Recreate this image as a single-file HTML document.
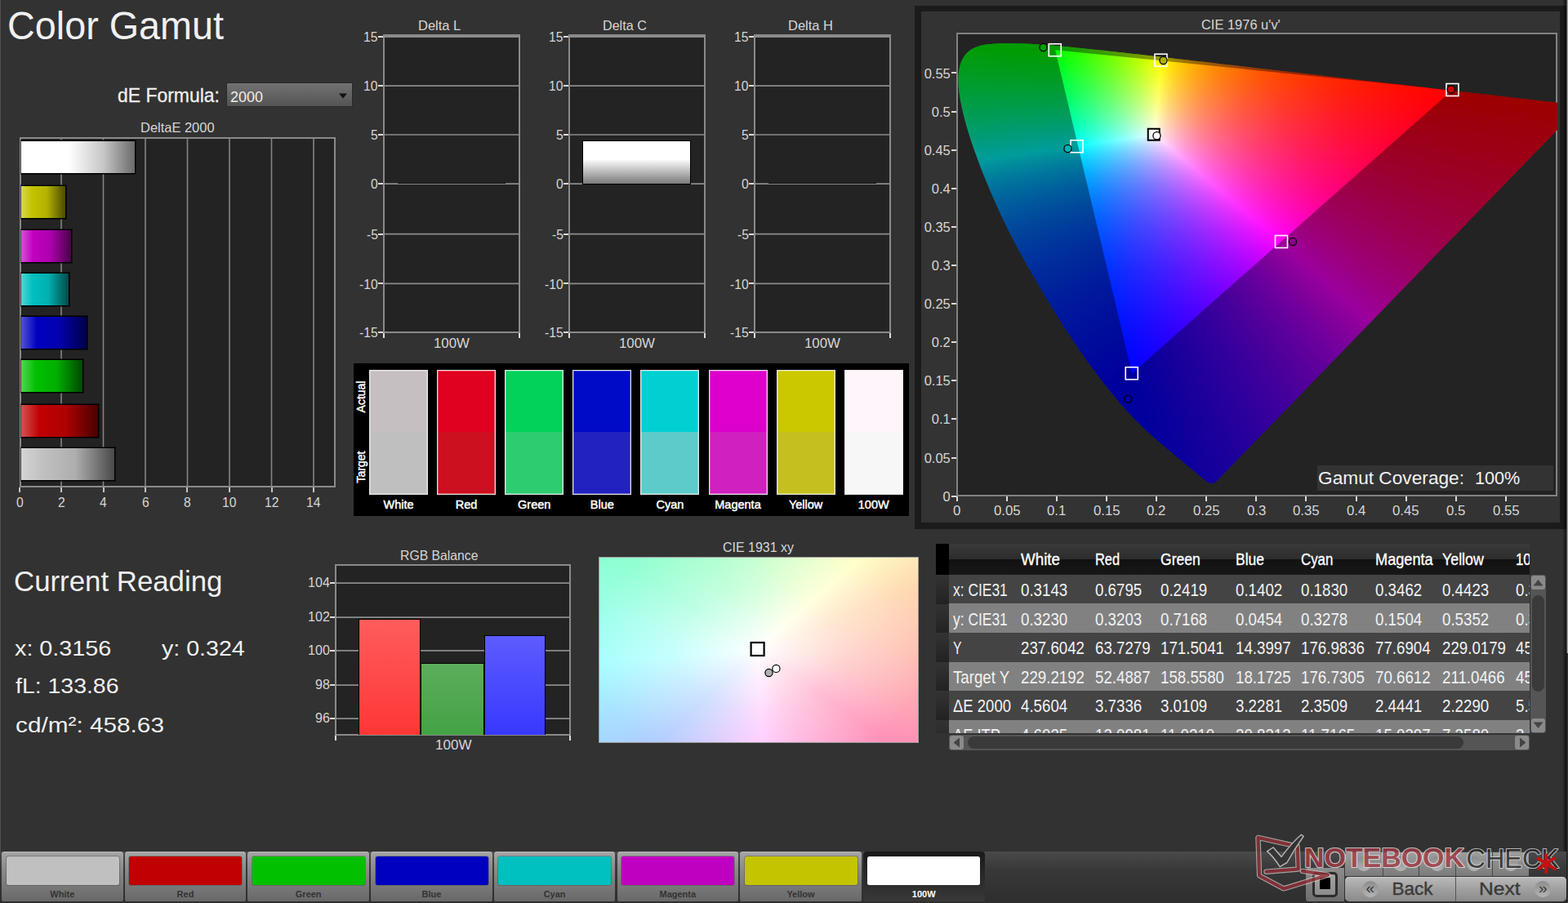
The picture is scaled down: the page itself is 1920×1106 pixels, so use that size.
<!DOCTYPE html>
<html lang="en"><head><meta charset="utf-8"><title>Color Gamut</title>
<style>
html,body{margin:0;padding:0}
body{width:1920px;height:1106px;background:#323232;position:relative;overflow:hidden;font-family:"Liberation Sans",sans-serif;color:#e6e6e6}
.a{position:absolute}
.t{position:absolute;white-space:pre;line-height:1;transform-origin:0 0}
.f i{display:block;height:2px}
</style></head>
<body>
<div class="a" style="left:0;top:0;width:1px;height:1106px;background:#525252"></div><div class="a" style="left:1px;top:0;width:1px;height:1106px;background:#2d2d2d"></div>
<span class="t" style="left:9px;top:6.94px;font-size:48.5px;transform:scaleX(0.964);color:#f0f0f0;">Color Gamut</span>
<span class="t" style="left:143.5px;top:104.68px;font-size:24px;transform:scaleX(0.956);color:#f0f0f0;-webkit-text-stroke:.3px #f0f0f0;">dE Formula:</span>
<div class="a" style="left:276.5px;top:100.6px;width:155px;height:30.4px;background:linear-gradient(#727272,#545454);border:1px solid #2a2a2a;box-sizing:border-box"></div>
<span class="t" style="left:282px;top:110.14px;font-size:18.5px;transform:scaleX(0.972);color:#eee;">2000</span>
<svg class="a" style="left:414px;top:114px" width="12" height="7" viewBox="0 0 12 7"><path d="M1,0.5H11L6,6.5Z" fill="#111"/></svg>
<span class="t" style="left:16.5px;top:694.55px;font-size:34.5px;transform:scaleX(1.009);color:#f0f0f0;">Current Reading</span>
<span class="t" style="left:18px;top:780.57px;font-size:26.5px;transform:scaleX(1.085);color:#f0f0f0;">x: 0.3156</span>
<span class="t" style="left:198.25px;top:780.57px;font-size:26.5px;transform:scaleX(1.079);color:#f0f0f0;">y: 0.324</span>
<span class="t" style="left:18.5px;top:826.87px;font-size:26.5px;transform:scaleX(1.073);color:#f0f0f0;">fL: 133.86</span>
<span class="t" style="left:18.5px;top:875.07px;font-size:26.5px;transform:scaleX(1.123);color:#f0f0f0;">cd/m²: 458.63</span>
<div class="a" style="left:24px;top:167.5px;width:387px;height:429.5px;background:#232323;border:2px solid #8a8a8a;box-sizing:border-box"></div>
<svg class="a" style="left:0;top:160px" width="420" height="450" viewBox="0 160 420 450"><path d="M75.00,169.5V595M126.50,169.5V595M178.00,169.5V595M229.50,169.5V595M281.00,169.5V595M332.50,169.5V595M384.00,169.5V595" stroke="#848484" stroke-width="1.6" fill="none"/></svg>
<div class="a" style="left:23px;top:597px;width:2px;height:6px;background:#c2c2c2;"></div>
<span class="t" style="left:20.04px;top:607.03px;font-size:16.5px;transform:scaleX(0.950);color:#d6d6d6;">0</span>
<div class="a" style="left:74px;top:597px;width:2px;height:6px;background:#c2c2c2;"></div>
<span class="t" style="left:70.64px;top:607.03px;font-size:16.5px;transform:scaleX(0.950);color:#d6d6d6;">2</span>
<div class="a" style="left:126px;top:597px;width:2px;height:6px;background:#c2c2c2;"></div>
<span class="t" style="left:122.14px;top:607.03px;font-size:16.5px;transform:scaleX(0.950);color:#d6d6d6;">4</span>
<div class="a" style="left:177px;top:597px;width:2px;height:6px;background:#c2c2c2;"></div>
<span class="t" style="left:173.64px;top:607.03px;font-size:16.5px;transform:scaleX(0.950);color:#d6d6d6;">6</span>
<div class="a" style="left:228px;top:597px;width:2px;height:6px;background:#c2c2c2;"></div>
<span class="t" style="left:225.14px;top:607.03px;font-size:16.5px;transform:scaleX(0.950);color:#d6d6d6;">8</span>
<div class="a" style="left:280px;top:597px;width:2px;height:6px;background:#c2c2c2;"></div>
<span class="t" style="left:272.28px;top:607.03px;font-size:16.5px;transform:scaleX(0.950);color:#d6d6d6;">10</span>
<div class="a" style="left:332px;top:597px;width:2px;height:6px;background:#c2c2c2;"></div>
<span class="t" style="left:323.78px;top:607.03px;font-size:16.5px;transform:scaleX(0.950);color:#d6d6d6;">12</span>
<div class="a" style="left:383px;top:597px;width:2px;height:6px;background:#c2c2c2;"></div>
<span class="t" style="left:375.28px;top:607.03px;font-size:16.5px;transform:scaleX(0.950);color:#d6d6d6;">14</span>
<div class="a" style="left:26px;top:172.1px;width:140.31px;height:41px;background:linear-gradient(90deg,#fff 0,#fff 42%,#c7c7c7 72%,#6b6b6b 100%);border:1px solid #000;border-left:0;box-sizing:border-box;box-shadow:0 0 0 1px rgba(0,0,0,.5)"></div>
<div class="a" style="left:26px;top:226.8px;width:54.82px;height:41px;background:linear-gradient(90deg,#d7d752 0,#c4c400 24%,#b2b202 58%,#4a4a00 100%);border:1px solid #000;border-left:0;box-sizing:border-box;box-shadow:0 0 0 1px rgba(0,0,0,.5)"></div>
<div class="a" style="left:26px;top:280.5px;width:61.77px;height:41px;background:linear-gradient(90deg,#d452d4 0,#c000c0 24%,#ae02ae 58%,#490049 100%);border:1px solid #000;border-left:0;box-sizing:border-box;box-shadow:0 0 0 1px rgba(0,0,0,.5)"></div>
<div class="a" style="left:26px;top:333.7px;width:58.68px;height:41px;background:linear-gradient(90deg,#52d4d4 0,#00c0c0 24%,#02aeae 58%,#004949 100%);border:1px solid #000;border-left:0;box-sizing:border-box;box-shadow:0 0 0 1px rgba(0,0,0,.5)"></div>
<div class="a" style="left:26px;top:387px;width:80.83px;height:41px;background:linear-gradient(90deg,#5252d4 0,#0000c0 24%,#0202ae 58%,#000049 100%);border:1px solid #000;border-left:0;box-sizing:border-box;box-shadow:0 0 0 1px rgba(0,0,0,.5)"></div>
<div class="a" style="left:26px;top:440.3px;width:75.68px;height:41px;background:linear-gradient(90deg,#52d452 0,#00c000 24%,#02ae02 58%,#004900 100%);border:1px solid #000;border-left:0;box-sizing:border-box;box-shadow:0 0 0 1px rgba(0,0,0,.5)"></div>
<div class="a" style="left:26px;top:494.8px;width:94.73px;height:41px;background:linear-gradient(90deg,#d45252 0,#c00000 24%,#ae0202 58%,#490000 100%);border:1px solid #000;border-left:0;box-sizing:border-box;box-shadow:0 0 0 1px rgba(0,0,0,.5)"></div>
<div class="a" style="left:26px;top:548.3px;width:114.69px;height:41px;background:linear-gradient(90deg,#d4d4d4 0,#c0c0c0 24%,#aeaeae 58%,#494949 100%);border:1px solid #000;border-left:0;box-sizing:border-box;box-shadow:0 0 0 1px rgba(0,0,0,.5)"></div>
<span class="t" style="left:172px;top:148.03px;font-size:16.5px;transform:scaleX(0.997);color:#d6d6d6;">DeltaE 2000</span>
<div class="a" style="left:469px;top:42px;width:168px;height:366px;background:#232323;border:2px solid #8a8a8a;border-top-width:4px;box-sizing:border-box"></div>
<div class="a" style="left:463px;top:44px;width:6px;height:2px;background:#dcdcdc;"></div>
<span class="t" style="left:445.06px;top:37.23px;font-size:16.5px;transform:scaleX(0.950);color:#d6d6d6;">15</span>
<div class="a" style="left:463px;top:104px;width:6px;height:2px;background:#dcdcdc;"></div>
<span class="t" style="left:445.06px;top:97.43px;font-size:16.5px;transform:scaleX(0.950);color:#d6d6d6;">10</span>
<div class="a" style="left:463px;top:164px;width:6px;height:2px;background:#dcdcdc;"></div>
<span class="t" style="left:453.78px;top:157.23px;font-size:16.5px;transform:scaleX(0.950);color:#d6d6d6;">5</span>
<div class="a" style="left:463px;top:224px;width:6px;height:2px;background:#dcdcdc;"></div>
<span class="t" style="left:453.78px;top:217.43px;font-size:16.5px;transform:scaleX(0.950);color:#d6d6d6;">0</span>
<div class="a" style="left:463px;top:286px;width:6px;height:2px;background:#dcdcdc;"></div>
<span class="t" style="left:448.56px;top:278.93px;font-size:16.5px;transform:scaleX(0.950);color:#d6d6d6;">-5</span>
<div class="a" style="left:463px;top:346px;width:6px;height:2px;background:#dcdcdc;"></div>
<span class="t" style="left:439.84px;top:339.53px;font-size:16.5px;transform:scaleX(0.950);color:#d6d6d6;">-10</span>
<div class="a" style="left:463px;top:406px;width:6px;height:2px;background:#dcdcdc;"></div>
<span class="t" style="left:439.84px;top:399.23px;font-size:16.5px;transform:scaleX(0.950);color:#d6d6d6;">-15</span>
<div class="a" style="left:469px;top:408px;width:2px;height:6px;background:#dcdcdc;"></div>
<div class="a" style="left:635px;top:408px;width:2px;height:6px;background:#dcdcdc;"></div>
<svg class="a" style="left:469px;top:40px" width="168" height="370" viewBox="469 40 168 370"><path d="M471,105.20H635M471,165.00H635M471,225.20H635M471,286.70H635M471,347.30H635" stroke="#8c8c8c" stroke-width="1.7" fill="none"/></svg>
<div class="a" style="left:487px;top:224px;width:132px;height:1px;background:#111;"></div>
<span class="t" style="left:512px;top:22.61px;font-size:17px;transform:scaleX(0.971);color:#d6d6d6;">Delta L</span>
<span class="t" style="left:531px;top:411.53px;font-size:16.5px;transform:scaleX(1.021);color:#d6d6d6;">100W</span>
<div class="a" style="left:696px;top:42px;width:168px;height:366px;background:#232323;border:2px solid #8a8a8a;border-top-width:4px;box-sizing:border-box"></div>
<div class="a" style="left:690px;top:44px;width:6px;height:2px;background:#dcdcdc;"></div>
<span class="t" style="left:672.06px;top:37.23px;font-size:16.5px;transform:scaleX(0.950);color:#d6d6d6;">15</span>
<div class="a" style="left:690px;top:104px;width:6px;height:2px;background:#dcdcdc;"></div>
<span class="t" style="left:672.06px;top:97.43px;font-size:16.5px;transform:scaleX(0.950);color:#d6d6d6;">10</span>
<div class="a" style="left:690px;top:164px;width:6px;height:2px;background:#dcdcdc;"></div>
<span class="t" style="left:680.78px;top:157.23px;font-size:16.5px;transform:scaleX(0.950);color:#d6d6d6;">5</span>
<div class="a" style="left:690px;top:224px;width:6px;height:2px;background:#dcdcdc;"></div>
<span class="t" style="left:680.78px;top:217.43px;font-size:16.5px;transform:scaleX(0.950);color:#d6d6d6;">0</span>
<div class="a" style="left:690px;top:286px;width:6px;height:2px;background:#dcdcdc;"></div>
<span class="t" style="left:675.56px;top:278.93px;font-size:16.5px;transform:scaleX(0.950);color:#d6d6d6;">-5</span>
<div class="a" style="left:690px;top:346px;width:6px;height:2px;background:#dcdcdc;"></div>
<span class="t" style="left:666.84px;top:339.53px;font-size:16.5px;transform:scaleX(0.950);color:#d6d6d6;">-10</span>
<div class="a" style="left:690px;top:406px;width:6px;height:2px;background:#dcdcdc;"></div>
<span class="t" style="left:666.84px;top:399.23px;font-size:16.5px;transform:scaleX(0.950);color:#d6d6d6;">-15</span>
<div class="a" style="left:696px;top:408px;width:2px;height:6px;background:#dcdcdc;"></div>
<div class="a" style="left:862px;top:408px;width:2px;height:6px;background:#dcdcdc;"></div>
<svg class="a" style="left:696px;top:40px" width="168" height="370" viewBox="696 40 168 370"><path d="M698,105.20H862M698,165.00H862M698,225.20H862M698,286.70H862M698,347.30H862" stroke="#8c8c8c" stroke-width="1.7" fill="none"/></svg>
<div class="a" style="left:713.2px;top:172px;width:133.2px;height:53.8px;background:linear-gradient(#fff 0,#fff 42%,#7a7a7a 100%);border:1px solid #000;box-sizing:border-box"></div>
<span class="t" style="left:738px;top:22.61px;font-size:17px;transform:scaleX(0.949);color:#d6d6d6;">Delta C</span>
<span class="t" style="left:758px;top:411.53px;font-size:16.5px;transform:scaleX(1.021);color:#d6d6d6;">100W</span>
<div class="a" style="left:923px;top:42px;width:168px;height:366px;background:#232323;border:2px solid #8a8a8a;border-top-width:4px;box-sizing:border-box"></div>
<div class="a" style="left:917px;top:44px;width:6px;height:2px;background:#dcdcdc;"></div>
<span class="t" style="left:899.06px;top:37.23px;font-size:16.5px;transform:scaleX(0.950);color:#d6d6d6;">15</span>
<div class="a" style="left:917px;top:104px;width:6px;height:2px;background:#dcdcdc;"></div>
<span class="t" style="left:899.06px;top:97.43px;font-size:16.5px;transform:scaleX(0.950);color:#d6d6d6;">10</span>
<div class="a" style="left:917px;top:164px;width:6px;height:2px;background:#dcdcdc;"></div>
<span class="t" style="left:907.78px;top:157.23px;font-size:16.5px;transform:scaleX(0.950);color:#d6d6d6;">5</span>
<div class="a" style="left:917px;top:224px;width:6px;height:2px;background:#dcdcdc;"></div>
<span class="t" style="left:907.78px;top:217.43px;font-size:16.5px;transform:scaleX(0.950);color:#d6d6d6;">0</span>
<div class="a" style="left:917px;top:286px;width:6px;height:2px;background:#dcdcdc;"></div>
<span class="t" style="left:902.56px;top:278.93px;font-size:16.5px;transform:scaleX(0.950);color:#d6d6d6;">-5</span>
<div class="a" style="left:917px;top:346px;width:6px;height:2px;background:#dcdcdc;"></div>
<span class="t" style="left:893.84px;top:339.53px;font-size:16.5px;transform:scaleX(0.950);color:#d6d6d6;">-10</span>
<div class="a" style="left:917px;top:406px;width:6px;height:2px;background:#dcdcdc;"></div>
<span class="t" style="left:893.84px;top:399.23px;font-size:16.5px;transform:scaleX(0.950);color:#d6d6d6;">-15</span>
<div class="a" style="left:923px;top:408px;width:2px;height:6px;background:#dcdcdc;"></div>
<div class="a" style="left:1089px;top:408px;width:2px;height:6px;background:#dcdcdc;"></div>
<svg class="a" style="left:923px;top:40px" width="168" height="370" viewBox="923 40 168 370"><path d="M925,105.20H1089M925,165.00H1089M925,225.20H1089M925,286.70H1089M925,347.30H1089" stroke="#8c8c8c" stroke-width="1.7" fill="none"/></svg>
<div class="a" style="left:941px;top:224px;width:132px;height:1px;background:#111;"></div>
<span class="t" style="left:964.5px;top:22.61px;font-size:17px;transform:scaleX(0.970);color:#d6d6d6;">Delta H</span>
<span class="t" style="left:985px;top:411.53px;font-size:16.5px;transform:scaleX(1.021);color:#d6d6d6;">100W</span>
<div class="a" style="left:432.5px;top:444.5px;width:680px;height:187.3px;background:#000;"></div>
<div class="a" style="left:452px;top:453.2px;width:72px;height:152.6px;background:linear-gradient(#c5bfc2 0,#c5bfc2 50%,#bfbfbf 50%,#bfbfbf 100%);border:1px solid #e4e4e4;box-sizing:border-box;box-shadow:inset 0 0 0 1px rgba(255,255,255,.28)"></div>
<span class="t" style="left:469.47px;top:610.73px;font-size:14.5px;transform:scaleX(1.000);color:#fff;-webkit-text-stroke:.45px #fff;">White</span>
<div class="a" style="left:535.1px;top:453.2px;width:72px;height:152.6px;background:linear-gradient(#e0001f 0,#e0001f 50%,#cd101f 50%,#cd101f 100%);border:1px solid #e4e4e4;box-sizing:border-box;box-shadow:inset 0 0 0 1px rgba(255,255,255,.28)"></div>
<span class="t" style="left:557.8px;top:610.73px;font-size:14.5px;transform:scaleX(1.000);color:#fff;-webkit-text-stroke:.45px #fff;">Red</span>
<div class="a" style="left:618.2px;top:453.2px;width:72px;height:152.6px;background:linear-gradient(#00d25a 0,#00d25a 50%,#2ecc71 50%,#2ecc71 100%);border:1px solid #e4e4e4;box-sizing:border-box;box-shadow:inset 0 0 0 1px rgba(255,255,255,.28)"></div>
<span class="t" style="left:634.05px;top:610.73px;font-size:14.5px;transform:scaleX(1.000);color:#fff;-webkit-text-stroke:.45px #fff;">Green</span>
<div class="a" style="left:701.3px;top:453.2px;width:72px;height:152.6px;background:linear-gradient(#000bc8 0,#000bc8 50%,#2222c0 50%,#2222c0 100%);border:1px solid #e4e4e4;box-sizing:border-box;box-shadow:inset 0 0 0 1px rgba(255,255,255,.28)"></div>
<span class="t" style="left:722.79px;top:610.73px;font-size:14.5px;transform:scaleX(1.000);color:#fff;-webkit-text-stroke:.45px #fff;">Blue</span>
<div class="a" style="left:784.4px;top:453.2px;width:72px;height:152.6px;background:linear-gradient(#00d0d2 0,#00d0d2 50%,#5ccbc9 50%,#5ccbc9 100%);border:1px solid #e4e4e4;box-sizing:border-box;box-shadow:inset 0 0 0 1px rgba(255,255,255,.28)"></div>
<span class="t" style="left:803.47px;top:610.73px;font-size:14.5px;transform:scaleX(1.000);color:#fff;-webkit-text-stroke:.45px #fff;">Cyan</span>
<div class="a" style="left:867.5px;top:453.2px;width:72px;height:152.6px;background:linear-gradient(#dd00cc 0,#dd00cc 50%,#d020c0 50%,#d020c0 100%);border:1px solid #e4e4e4;box-sizing:border-box;box-shadow:inset 0 0 0 1px rgba(255,255,255,.28)"></div>
<span class="t" style="left:875.29px;top:610.73px;font-size:14.5px;transform:scaleX(1.000);color:#fff;-webkit-text-stroke:.45px #fff;">Magenta</span>
<div class="a" style="left:950.6px;top:453.2px;width:72px;height:152.6px;background:linear-gradient(#cbc800 0,#cbc800 50%,#c5c020 50%,#c5c020 100%);border:1px solid #e4e4e4;box-sizing:border-box;box-shadow:inset 0 0 0 1px rgba(255,255,255,.28)"></div>
<span class="t" style="left:965.91px;top:610.73px;font-size:14.5px;transform:scaleX(1.000);color:#fff;-webkit-text-stroke:.45px #fff;">Yellow</span>
<div class="a" style="left:1033.7px;top:453.2px;width:72px;height:152.6px;background:linear-gradient(#fff5fa 0,#fff5fa 50%,#f7f7f7 50%,#f7f7f7 100%);border:1px solid #e4e4e4;box-sizing:border-box;box-shadow:inset 0 0 0 1px rgba(255,255,255,.28)"></div>
<span class="t" style="left:1050.76px;top:610.73px;font-size:14.5px;transform:scaleX(1.000);color:#fff;-webkit-text-stroke:.45px #fff;">100W</span>
<span class="t" style="left:423.34px;top:478px;font-size:14px;-webkit-text-stroke:.45px #fff;color:#fff;line-height:16px;transform:rotate(-90deg);transform-origin:50% 50%">Actual</span>
<span class="t" style="left:423.34px;top:564px;font-size:14px;-webkit-text-stroke:.45px #fff;color:#fff;line-height:16px;transform:rotate(-90deg);transform-origin:50% 50%">Target</span>
<div class="a" style="left:1120px;top:7px;width:799px;height:641.3px;background:#1b1b1b;"></div>
<div class="a" style="left:1128px;top:14px;width:782.2px;height:626px;background:#333;"></div>
<div class="a" style="left:1171px;top:40px;width:736.4px;height:568px;background:#232323;border:2px solid #828282;box-sizing:border-box"></div>
<div class="a f" style="left:1172px;top:42px;width:735px;height:565px;clip-path:path('M315.8,549.2 313.6,549.3 313.5,549.3 313.5,549.3 313.5,549.3 313.4,549.3 313.4,549.3 313.3,549.4 313.3,549.5 313.2,549.5 313.2,549.6 313.1,549.6 313.0,549.7 312.9,549.7 312.9,549.6 312.8,549.6 312.7,549.6 312.6,549.7 312.5,549.8 312.4,549.8 312.3,549.9 312.2,550.0 312.1,550.0 312.0,550.0 311.9,550.0 311.7,550.0 311.6,550.0 311.5,550.0 311.3,550.0 311.1,550.0 311.0,550.0 310.8,550.0 310.6,550.0 310.4,550.0 310.3,550.0 310.0,550.0 309.8,550.0 309.5,549.9 309.2,549.7 308.8,549.6 308.4,549.3 307.9,549.1 307.4,548.7 306.8,548.4 306.2,547.9 305.5,547.5 304.8,546.9 304.0,546.4 303.2,545.8 302.4,545.1 301.5,544.4 300.5,543.6 299.4,542.8 298.3,541.8 297.0,540.8 295.7,539.8 294.3,538.6 292.9,537.4 291.4,536.1 289.9,534.8 288.3,533.4 286.5,531.9 284.8,530.4 282.9,528.9 281.0,527.3 278.9,525.6 276.7,523.8 274.3,521.8 271.9,519.8 269.3,517.7 266.6,515.5 263.8,513.1 260.9,510.7 257.9,508.3 254.8,505.7 251.6,503.0 248.2,500.1 244.7,497.0 241.0,493.8 237.2,490.3 233.3,486.7 229.1,482.8 224.9,478.7 220.6,474.5 216.1,470.0 211.3,465.0 206.2,459.3 200.7,453.0 194.9,446.2 188.7,438.8 182.4,430.9 175.8,422.5 169.0,413.5 162.0,403.9 154.7,393.8 147.4,383.2 139.9,372.1 132.3,360.4 124.5,348.1 116.6,335.4 108.7,322.4 101.0,309.3 93.2,296.1 85.5,282.4 77.8,268.7 70.4,255.0 63.5,241.5 56.9,228.1 50.7,214.8 44.8,201.6 39.3,188.7 34.2,176.4 29.4,164.5 25.1,153.0 21.1,141.9 17.5,131.4 14.3,121.5 11.5,112.2 9.1,103.5 7.1,95.4 5.4,87.8 4.0,80.7 2.9,74.0 2.1,68.0 1.7,62.4 1.5,57.2 1.5,52.3 1.8,47.7 2.4,43.5 3.2,39.6 4.2,36.0 5.4,32.7 6.9,29.7 8.6,27.0 10.5,24.5 12.6,22.3 14.8,20.3 17.1,18.6 19.7,17.2 22.3,16.0 25.1,14.9 28.0,14.0 31.0,13.3 34.1,12.7 37.2,12.3 40.5,12.0 43.8,11.7 47.1,11.4 50.5,11.3 54.0,11.2 57.4,11.1 60.9,11.1 64.4,11.1 67.8,11.1 71.3,11.2 74.8,11.2 78.4,11.3 81.9,11.4 85.5,11.6 89.1,11.8 92.8,12.0 96.6,12.2 100.4,12.4 104.2,12.7 108.1,13.0 112.1,13.3 116.2,13.6 120.3,13.9 124.5,14.3 128.7,14.7 133.0,15.1 137.5,15.5 142.0,16.0 146.6,16.4 151.2,16.9 156.0,17.4 160.9,17.9 165.9,18.4 170.9,19.0 176.1,19.5 181.4,20.1 186.8,20.7 192.4,21.3 198.0,21.9 203.7,22.6 209.6,23.2 215.5,23.9 221.6,24.6 227.9,25.3 234.2,26.0 240.7,26.8 247.3,27.5 254.1,28.3 260.9,29.1 267.9,29.9 275.0,30.7 282.2,31.5 289.6,32.4 297.1,33.3 304.7,34.1 312.5,35.0 320.3,35.9 328.3,36.9 336.4,37.8 344.7,38.8 353.0,39.7 361.4,40.7 369.9,41.7 378.6,42.7 387.3,43.7 396.1,44.7 404.9,45.7 413.8,46.7 422.7,47.8 431.7,48.8 440.7,49.8 449.5,50.9 458.3,51.9 467.0,52.9 475.6,53.9 484.2,54.9 492.8,55.9 501.4,56.9 509.9,57.8 518.4,58.8 526.8,59.8 534.9,60.7 542.9,61.6 550.7,62.5 558.3,63.4 565.8,64.3 573.1,65.1 580.2,65.9 587.1,66.7 593.9,67.5 600.4,68.3 606.8,69.0 612.9,69.7 618.9,70.4 624.6,71.1 630.1,71.7 635.5,72.3 640.7,72.9 645.6,73.5 650.4,74.0 655.0,74.6 659.5,75.1 663.6,75.6 667.3,76.0 671.0,76.4 675.0,76.9 679.8,77.4 685.7,78.1 692.4,78.9 699.5,79.7 706.3,80.5 712.2,81.2 717.3,81.8 722.0,82.3 726.2,82.8 730.0,83.2 733.6,83.6 736.7,84.0 739.3,84.3 741.7,84.6 744.0,84.8 746.2,85.1 748.7,85.4 751.1,85.7 753.4,85.9 755.5,86.2 757.3,86.4 758.6,86.5 759.7,86.7 760.5,86.7 761.1,86.8 761.5,86.9 764.1,86.9Z')">
<i></i>
<i></i>
<i></i>
<i></i>
<i></i>
<i style="background:linear-gradient(90deg,#00ff01 29px,#0f0 115px)"></i>
<i style="background:linear-gradient(90deg,#00ff04 21px,#0f0 54px,#0f0 118px,#1dff00 138px)"></i>
<i style="background:linear-gradient(90deg,#00ff08 17px,#0f0 74px,#0f0 119px,#3fff00 159px)"></i>
<i style="background:linear-gradient(90deg,#00ff0b 13px,#0f0 94px,#01ff00 120px,#2fff00 150px,#60ff00 178px)"></i>
<i style="background:linear-gradient(90deg,#00ff0e 11px,#0f0 120px,#3eff00 159px,#82ff00 196px)"></i>
<i style="background:linear-gradient(90deg,#0f1 8px,#01ff02 121px,#51ff00 170px,#a8ff00 214px)"></i>
<i style="background:linear-gradient(90deg,#00ff13 7px,#00ff05 121px,#2fff00 151px,#63ff00 180px,#98ff00 207px,#d0ff00 232px)"></i>
<i style="background:linear-gradient(90deg,#00ff16 5px,#01ff08 122px,#39ff03 157px,#76ff00 190px,#b5ff00 220px,#fbff00 249px)"></i>
<i style="background:linear-gradient(90deg,#00ff19 4px,#00ff0b 122px,#38ff06 157px,#75ff00 190px,#b7ff00 221px,#feff00 250px,#ffd900 267px)"></i>
<i style="background:linear-gradient(90deg,#00ff1c 3px,#01ff0f 123px,#3aff09 158px,#77ff04 191px,#baff00 222px,#feff00 250px,#ffd800 267px,#ffb900 284px)"></i>
<i style="background:linear-gradient(90deg,#00ff1f 2px,#00ff12 123px,#39ff0d 158px,#77ff08 191px,#baff02 222px,#ff0 250px,#ffca00 274px,#ff9f00 301px)"></i>
<i style="background:linear-gradient(90deg,#00ff21 1px,#00ff15 123px,#35ff11 156px,#75ff0c 190px,#b7ff06 221px,#ff0 250px,#ffdb00 265px,#ffbd00 281px,#ffa100 299px,#f80 319px)"></i>
<i style="background:linear-gradient(90deg,#00ff24 0px,#00ff18 124px,#3aff14 159px,#76ff0f 191px,#b7ff0a 221px,#fdff05 249px,#ffd200 269px,#ffb100 288px,#ff9200 310px,#ff7600 336px)"></i>
<i style="background:linear-gradient(90deg,#00ff27 0px,#01ff1c 125px,#39ff18 159px,#76ff13 191px,#b8ff0e 221px,#feff09 249px,#ffce04 271px,#ffa700 294px,#ff8500 321px,#ff6700 353px)"></i>
<i style="background:linear-gradient(90deg,#00ff2a 0px,#00ff1f 125px,#39ff1b 159px,#76ff17 191px,#b8ff13 221px,#feff0e 249px,#ffc907 273px,#ff9e02 300px,#ff7900 332px,#ff5900 371px)"></i>
<i style="background:linear-gradient(90deg,#00ff2d 0px,#00ff23 125px,#37ff1f 158px,#76ff1b 191px,#b8ff17 221px,#ffff12 249px,#ffdf0e 262px,#ffc50a 275px,#ff9504 306px,#ff6e00 343px,#ff4d00 388px)"></i>
<i style="background:linear-gradient(90deg,#00ff30 0px,#00ff26 126px,#3aff23 160px,#77ff1f 192px,#b8ff1b 221px,#ffff17 249px,#ffdf12 262px,#ffc10d 277px,#ffa609 293px,#ff8e06 311px,#ff6500 353px,#ff4300 405px)"></i>
<i style="background:linear-gradient(90deg,#00ff32 0px,#00ff2a 126px,#37ff26 159px,#75ff23 191px,#b6ff1f 220px,#fdff1b 248px,#ffd815 265px,#ffbb10 280px,#ff9f0c 298px,#ff8708 317px,#ff5c01 364px,#ff3a00 423px)"></i>
<i style="background:linear-gradient(90deg,#00ff35 0px,#00ff2d 127px,#3aff2a 161px,#77ff27 192px,#b8ff24 221px,#fdff20 248px,#ffd719 265px,#ffb713 282px,#ff9a0e 301px,#ff810a 322px,#ff6a06 346px,#ff5402 374px,#ff3200 440px)"></i>
<i style="background:linear-gradient(90deg,#00ff38 0px,#00ff31 127px,#36ff2e 159px,#75ff2b 191px,#b3ff28 219px,#fffd24 249px,#ffd61d 265px,#ffb316 284px,#ff9410 305px,#ff7a0b 328px,#ff6207 355px,#ff4d03 385px,#ff2a00 457px)"></i>
<i style="background:linear-gradient(90deg,#00ff3b 0px,#01ff34 128px,#39ff32 161px,#74ff2f 191px,#b1ff2d 218px,#fffd29 249px,#ffd421 266px,#ffaf19 286px,#ff9013 308px,#ff740d 333px,#ff5c08 362px,#ff4704 394px,#ff2400 474px)"></i>
<i style="background:linear-gradient(90deg,#00ff3e 0px,#00ff38 128px,#39ff36 161px,#76ff33 192px,#b8ff31 221px,#ffff2e 248px,#ffd325 266px,#ffae1c 286px,#ff8c15 310px,#ff700f 337px,#ff5709 368px,#ff4105 404px,#ff1e00 492px)"></i>
<i style="background:linear-gradient(90deg,#00ff41 0px,#01ff3b 129px,#3aff3a 162px,#76ff38 192px,#b6ff35 220px,#ff3 248px,#ffd028 267px,#ffaa1f 288px,#ff8817 313px,#ff6b10 342px,#ff510a 375px,#ff3b05 414px,#ff2801 458px,#ff1800 509px)"></i>
<i style="background:linear-gradient(90deg,#0f4 0px,#00ff3f 129px,#38ff3e 161px,#76ff3c 192px,#b6ff3a 220px,#fffe38 248px,#ffd02c 267px,#ffa722 290px,#ff8419 316px,#ff6712 346px,#ff4c0c 382px,#ff3606 423px,#ff2301 471px,#ff1300 526px)"></i>
<i style="background:linear-gradient(90deg,#00ff47 0px,#01ff43 130px,#39ff42 162px,#75ff40 192px,#b4ff3f 219px,#fffd3c 248px,#ffcd30 268px,#ffa325 292px,#ff801c 319px,#ff6214 351px,#ff480d 389px,#ff3107 433px,#ff1f02 484px,#ff0e00 544px)"></i>
<i style="background:linear-gradient(90deg,#00ff4a 0px,#00ff47 130px,#37ff46 161px,#73ff45 191px,#b1ff43 218px,#fffd41 248px,#ffca33 269px,#ffa128 293px,#ff7c1e 322px,#ff5d15 356px,#ff430e 396px,#ff2d08 442px,#ff1a02 497px,#ff0a00 561px)"></i>
<i style="background:linear-gradient(90deg,#00ff4d 0px,#01ff4b 131px,#3aff4a 163px,#77ff49 193px,#b9ff48 221px,#ffff47 247px,#ffca37 269px,#ff9f2b 294px,#ff7920 324px,#ff5a17 359px,#ff400f 401px,#ff2908 451px,#ff1603 510px,#ff0600 579px)"></i>
<i style="background:linear-gradient(90deg,#00ff50 0px,#00ff4f 131px,#39ff4e 163px,#77ff4d 193px,#b9ff4d 221px,#ffff4c 247px,#ffc93c 269px,#ff9c2e 295px,#f72 326px,#ff5718 363px,#ff3c10 407px,#ff2609 459px,#ff1203 522px,#ff0300 596px)"></i>
<i style="background:linear-gradient(90deg,#00ff53 0px,#01ff52 132px,#3bff52 164px,#77ff52 193px,#b6ff52 220px,#fffe51 247px,#ffe148 258px,#ffc63f 270px,#ff9930 297px,#ff7324 329px,#ff531a 368px,#ff3711 415px,#ff2109 471px,#ff0d03 541px,#f00 613px)"></i>
<i style="background:linear-gradient(90deg,#00ff56 0px,#00ff56 132px,#38ff56 163px,#74ff56 192px,#b4ff57 219px,#fffe56 247px,#ffe04c 258px,#ffc643 270px,#ff9733 298px,#ff6f26 332px,#ff4f1b 373px,#f31 424px,#ff1b09 487px,#ff0502 581px,#f00 630px)"></i>
<i style="background:linear-gradient(90deg,#00ff5a 0px,#01ff5a 133px,#38ff5b 163px,#74ff5b 192px,#b1ff5b 218px,#fffd5b 247px,#ffe051 258px,#ffc347 271px,#ff9235 301px,#ff6b27 336px,#ff4a1c 379px,#ff2d11 436px,#ff1609 505px,#ff0001 604px,#f00 648px)"></i>
<i style="background:linear-gradient(90deg,#00ff5d 0px,#00ff5f 133px,#37ff5f 163px,#73ff60 192px,#afff60 217px,#fffd60 247px,#fd5 259px,#ffc14a 272px,#ff9038 302px,#ff6829 339px,#ff461d 384px,#ff2812 446px,#ff1009 523px,#ff0003 601px,#f00 665px)"></i>
<i style="background:linear-gradient(90deg,#00ff60 0px,#00ff63 133px,#36ff64 163px,#75ff65 193px,#b7ff66 220px,#ffff67 246px,#ffdf5a 258px,#ffc04e 272px,#ffa544 287px,#ff8e3b 303px,#ff652b 341px,#ff431e 388px,#ff2412 455px,#ff0c09 540px,#ff0004 599px,#f00 683px)"></i>
<i style="background:linear-gradient(90deg,#00ff63 0px,#00ff67 134px,#3aff68 165px,#75ff69 193px,#b7ff6b 220px,#fffe6c 246px,#ffde5f 258px,#ffbf52 272px,#ffa548 287px,#ff8c3e 304px,#ff622d 344px,#ff401f 393px,#ff2012 466px,#ff0708 559px,#ff0005 597px,#f00 700px)"></i>
<i style="background:linear-gradient(90deg,#0f6 0px,#00ff6b 134px,#37ff6c 164px,#75ff6e 193px,#b4ff70 219px,#fffe71 246px,#ffdb63 259px,#ffbd56 273px,#ffa14a 289px,#ff8940 306px,#ff5f2e 347px,#ff3d20 398px,#ff1c13 476px,#ff0308 578px,#ff0007 595px,#f00 717px)"></i>
<i style="background:linear-gradient(90deg,#00ff6a 0px,#00ff6f 135px,#39ff71 165px,#75ff73 193px,#b2ff75 218px,#fffd77 246px,#ffda67 259px,#ffbc5a 273px,#ffa04e 289px,#ff8743 307px,#ff5c30 350px,#ff3921 403px,#ff1913 485px,#ff0008 592px,#f00 735px)"></i>
<i style="background:linear-gradient(90deg,#00ff6d 1px,#00ff74 135px,#36ff76 164px,#72ff78 192px,#afff7a 217px,#fffd7c 246px,#ffda6c 259px,#ffbb5e 273px,#ff9f52 289px,#ff8646 307px,#ff5b33 350px,#ff3923 403px,#ff1915 484px,#ff0009 590px,#f00 735px)"></i>
<i style="background:linear-gradient(90deg,#00ff70 1px,#00ff78 136px,#39ff7a 166px,#76ff7d 194px,#b7ff80 220px,#ffff83 245px,#ffdb72 258px,#ffbc63 272px,#ffa056 288px,#ff874a 306px,#ff5c36 348px,#ff3926 401px,#ff1916 482px,#ff000b 588px,#ff0001 735px)"></i>
<i style="background:linear-gradient(90deg,#00ff74 1px,#00ff7c 136px,#37ff7f 165px,#76ff82 194px,#b7ff85 220px,#ff8 245px,#ffdb77 258px,#ffbc68 272px,#ff9f5a 288px,#ff864e 306px,#ff5b39 348px,#ff3928 401px,#ff1918 481px,#ff000c 585px,#ff0002 735px)"></i>
<i style="background:linear-gradient(90deg,#0f7 2px,#01ff81 137px,#38ff84 166px,#76ff87 194px,#b5ff8b 219px,#fffe8e 245px,#ffda7c 258px,#ffbb6c 272px,#ff9f5e 288px,#ff8551 306px,#ff5b3b 348px,#ff382a 401px,#ff191a 480px,#ff000e 583px,#ff0003 735px)"></i>
<i style="background:linear-gradient(90deg,#00ff7a 2px,#00ff85 137px,#36ff89 165px,#73ff8c 193px,#b2ff90 218px,#fffd94 245px,#ffd981 258px,#ffba71 272px,#ff9e62 288px,#ff8454 306px,#ff5a3e 348px,#ff382c 401px,#ff181c 479px,#ff000f 581px,#ff0004 735px)"></i>
<i style="background:linear-gradient(90deg,#00ff7e 3px,#01ff8a 138px,#39ff8e 167px,#75ff92 194px,#b2ff96 218px,#fffd99 245px,#ffd986 258px,#ffba75 272px,#ff9d66 288px,#ff8458 306px,#ff5941 348px,#ff372e 401px,#ff181d 479px,#f01 579px,#ff0005 735px)"></i>
<i style="background:linear-gradient(90deg,#00ff81 3px,#00ff8f 138px,#38ff93 167px,#77ff97 195px,#b8ff9c 220px,#ffffa1 244px,#ffdb8c 257px,#ffbb7b 271px,#ff9e6b 287px,#ff845c 305px,#ff5944 347px,#ff3731 400px,#ff181f 477px,#ff0012 576px,#ff0006 735px)"></i>
<i style="background:linear-gradient(90deg,#00ff85 3px,#01ff93 139px,#3aff98 168px,#77ff9d 195px,#b8ffa1 220px,#ffffa7 244px,#ffda91 257px,#ffba7f 271px,#ff9d6f 287px,#ff8460 305px,#ff5947 347px,#ff3633 400px,#ff1821 476px,#ff0014 574px,#ff0007 735px)"></i>
<i style="background:linear-gradient(90deg,#00ff89 4px,#00ff98 139px,#37ff9d 167px,#74ffa2 194px,#b5ffa7 219px,#fffead 244px,#ffd997 257px,#ffba84 271px,#ff9d73 287px,#ff8363 305px,#ff584a 347px,#ff3635 400px,#ff1823 475px,#ff0015 572px,#ff0008 735px)"></i>
<i style="background:linear-gradient(90deg,#00ff8c 4px,#01ff9d 140px,#39ffa2 168px,#76ffa7 195px,#b2ffad 218px,#fffeb3 244px,#ffd89c 257px,#ffb988 271px,#ff9c77 287px,#ff8367 304px,#ff6c59 324px,#ff574c 347px,#ff3537 400px,#ff1725 474px,#ff0017 570px,#ff0009 735px)"></i>
<i style="background:linear-gradient(90deg,#00ff90 5px,#00ffa2 140px,#38ffa7 168px,#74ffad 194px,#b0ffb3 217px,#fffdb9 244px,#ffd8a1 257px,#ffb88d 271px,#ff9b7b 287px,#ff836b 304px,#ff5750 346px,#ff3439 400px,#ff1727 473px,#ff0018 567px,#ff000a 735px)"></i>
<i style="background:linear-gradient(90deg,#00ff93 5px,#01ffa7 141px,#37ffac 168px,#73ffb2 194px,#b0ffb9 217px,#feffc1 243px,#fffcbf 244px,#ffd7a6 257px,#ffb792 271px,#ff9a7f 287px,#ff826f 304px,#ff5752 346px,#ff343c 400px,#ff1729 472px,#ff001a 565px,#ff000b 735px)"></i>
<i style="background:linear-gradient(90deg,#00ff97 6px,#00ffac 141px,#39ffb2 169px,#75ffb8 195px,#b8ffc0 220px,#ffffc7 243px,#ffd9ae 256px,#ffb998 270px,#ff9b84 286px,#ff8273 303px,#ff6b64 323px,#ff5756 345px,#ff343e 398px,#ff172b 470px,#ff001b 563px,#ff000b 735px)"></i>
<i style="background:linear-gradient(90deg,#00ff9b 7px,#00ffb1 141px,#36ffb7 168px,#75ffbe 195px,#b6ffc6 219px,#fffecd 243px,#ffd8b3 256px,#ffb89d 270px,#ff9b88 286px,#ff8277 303px,#ff6a67 323px,#ff5659 345px,#ff3441 398px,#ff162d 470px,#ff001d 561px,#ff000c 735px)"></i>
<i style="background:linear-gradient(90deg,#00ff9f 7px,#00ffb6 142px,#38ffbd 169px,#75ffc4 195px,#b3ffcc 218px,#fffed4 243px,#ffd8b8 256px,#ffb7a1 270px,#ff9a8c 286px,#ff817b 303px,#ff6a6a 323px,#ff555c 345px,#ff3343 398px,#ff172f 468px,#ff001f 558px,#ff000d 735px)"></i>
<i style="background:linear-gradient(90deg,#00ffa3 8px,#0fb 142px,#35ffc2 168px,#72ffca 194px,#b0ffd2 217px,#fffdda 243px,#ffd7be 256px,#ffb6a6 270px,#ff9991 286px,#ff807e 303px,#ff696d 323px,#ff555f 345px,#ff3245 398px,#ff1630 468px,#ff0020 556px,#ff000e 735px)"></i>
<i style="background:linear-gradient(90deg,#00ffa6 8px,#00ffc1 143px,#39ffc8 170px,#74ffd0 195px,#b0ffd8 217px,#fffce1 243px,#ffd9c6 255px,#ffb8ad 269px,#ff9a96 285px,#ff7f82 303px,#ff6871 323px,#ff5461 345px,#ff3247 398px,#ff1632 467px,#f02 554px,#ff000f 735px)"></i>
<i style="background:linear-gradient(90deg,#0fa 9px,#00ffc6 143px,#36ffcd 169px,#76ffd7 196px,#b9ffe0 220px,#ffffea 242px,#ffd8cb 255px,#ffb7b2 269px,#ff999a 285px,#ff8087 302px,#ff6975 322px,#ff5465 344px,#ff324a 397px,#ff1635 465px,#ff0024 552px,#ff0010 735px)"></i>
<i style="background:linear-gradient(90deg,#00ffae 9px,#00ffcb 144px,#3affd4 171px,#76ffdd 196px,#b6ffe6 219px,#fffff0 242px,#ffdad3 254px,#ffb8b8 268px,#ff9aa0 284px,#ff818c 301px,#ff6979 321px,#ff5469 343px,#ff314c 397px,#ff1637 464px,#ff0025 549px,#f01 735px)"></i>
<i style="background:linear-gradient(90deg,#00ffb2 10px,#00ffd1 144px,#37ffd9 170px,#73ffe3 195px,#b3ffec 218px,#fffef7 242px,#ffd9d9 254px,#ffb7bd 268px,#ff99a5 284px,#ff8090 301px,#ff687c 321px,#ff546c 343px,#ff314f 396px,#ff1639 463px,#ff0027 547px,#ff0012 735px)"></i>
<i style="background:linear-gradient(90deg,#00ffb6 11px,#01ffd7 145px,#38ffdf 171px,#76ffe9 196px,#b3fff3 218px,#fffdfe 242px,#ffd9df 254px,#ffb7c3 268px,#ff98a9 284px,#ff7f94 301px,#ff6780 321px,#ff536f 343px,#ff3051 396px,#ff153b 462px,#ff0029 545px,#ff0013 735px)"></i>
<i style="background:linear-gradient(90deg,#00ffba 11px,#00ffdc 145px,#31ffe4 168px,#68ffee 191px,#99fff6 209px,#cfffff 227px,#fff6ff 244px,#ffd2e0 256px,#ffb2c4 270px,#ff94ab 286px,#ff7a94 304px,#ff506f 346px,#ff2e52 399px,#ff143c 463px,#ff002b 543px,#ff0014 733px)"></i>
<i style="background:linear-gradient(90deg,#00ffbf 12px,#00ffcf 84px,#01ffe2 146px,#51fff0 182px,#a7ffff 214px,#ffebfd 247px,#ffc7dd 260px,#ffa9c2 274px,#ff8da9 290px,#ff7695 307px,#ff4d70 349px,#ff2b53 403px,#ff143e 464px,#ff002d 540px,#ff0015 731px)"></i>
<i style="background:linear-gradient(90deg,#00ffc3 13px,#00ffd4 84px,#00ffe8 146px,#3dfff3 174px,#7fffff 200px,#ffe5fe 249px,#ffc2de 262px,#ffa4c4 276px,#ff89ab 292px,#ff7296 309px,#ff4a72 351px,#ff2a54 405px,#ff133f 465px,#ff002e 538px,#ff0016 729px)"></i>
<i style="background:linear-gradient(90deg,#00ffc7 13px,#00ffd9 85px,#01ffee 147px,#5dffff 187px,#aeeeff 220px,#ffdeff 251px,#ffbce0 264px,#ffa0c5 278px,#ff85ad 294px,#ff6f98 311px,#ff4773 354px,#ff2856 407px,#ff1241 465px,#ff0030 536px,#ff0017 727px)"></i>
<i style="background:linear-gradient(90deg,#00ffcb 14px,#00ffde 85px,#00fff4 147px,#3cffff 174px,#91edff 210px,#ffd5fd 254px,#ffb5df 267px,#ff99c5 281px,#ff80ad 297px,#ff6a97 315px,#ff4473 358px,#ff2656 411px,#ff1142 467px,#ff0032 534px,#ff0024 620px,#ff0018 725px)"></i>
<i style="background:linear-gradient(90deg,#00ffd0 15px,#00ffe3 86px,#01fffa 148px,#1bffff 160px,#7aebff 202px,#ffcffe 256px,#ffb0e0 269px,#ff95c6 283px,#ff7dae 299px,#ff6799 317px,#ff4274 360px,#ff2458 413px,#ff1044 467px,#ff0034 532px,#ff0025 618px,#ff001a 723px)"></i>
<i style="background:linear-gradient(90deg,#00ffd4 15px,#00ffe7 83px,#00feff 148px,#7be4ff 204px,#ffc8ff 258px,#ffabe1 271px,#ff8fc6 286px,#ff6399 320px,#ff3f75 363px,#ff2258 416px,#ff1046 468px,#ff0036 529px,#ff0027 615px,#ff001b 721px)"></i>
<i style="background:linear-gradient(90deg,#00ffd8 16px,#0ff 132px,#01f8ff 149px,#76dfff 203px,#ffc0fd 261px,#ffa4e0 274px,#ff8ac5 289px,#ff5f9a 323px,#ff3c76 366px,#ff2059 419px,#ff0f47 468px,#ff0038 527px,#ff0029 613px,#ff001c 719px)"></i>
<i style="background:linear-gradient(90deg,#0fd 17px,#0ff 119px,#00f2ff 149px,#79d8ff 206px,#ffbbfe 263px,#ff9fe2 276px,#ff86c7 291px,#ff5c9b 325px,#ff3a77 368px,#ff1f5a 422px,#ff0e49 469px,#ff003a 525px,#ff002a 612px,#ff001d 718px)"></i>
<i style="background:linear-gradient(90deg,#00ffe1 17px,#0ff 106px,#00edff 149px,#76d3ff 206px,#ffb5ff 265px,#ff99e1 279px,#ff82c8 293px,#ff599b 328px,#ff3878 371px,#ff1d5c 424px,#ff003c 523px,#ff002c 609px,#ff001e 716px)"></i>
<i style="background:linear-gradient(90deg,#00ffe6 18px,#0ff 92px,#00e7ff 150px,#77cdff 208px,#ffaefe 268px,#ff94e2 281px,#ff7dc8 296px,#ff559c 331px,#ff3579 374px,#ff1b5c 428px,#ff003e 520px,#ff002d 607px,#ff001f 714px)"></i>
<i style="background:linear-gradient(90deg,#00ffeb 19px,#0ff 79px,#00e2ff 150px,#77c7ff 209px,#ffa9ff 270px,#ff90e3 283px,#ff79c9 298px,#ff529d 333px,#ff337a 376px,#ff1a5d 430px,#ff0040 518px,#ff002f 605px,#ff0021 712px)"></i>
<i style="background:linear-gradient(90deg,#00ffef 19px,#0ff 65px,#0df 151px,#7cc1ff 213px,#ffa3ff 272px,#ff78cd 298px,#ff55a5 329px,#ff3984 366px,#ff2168 411px,#ff0f54 459px,#ff0042 516px,#ff0030 603px,#f02 710px)"></i>
<i style="background:linear-gradient(90deg,#00fff4 20px,#0ff 52px,#00d8ff 151px,#73beff 210px,#ff9dfe 275px,#ff73cd 301px,#ff52a5 332px,#ff3684 369px,#ff1f69 414px,#ff0e55 460px,#f04 514px,#ff0032 601px,#ff0023 708px)"></i>
<i style="background:linear-gradient(90deg,#00fff9 21px,#0ff 39px,#00d3ff 152px,#7ab7ff 215px,#ff98ff 277px,#ff71d0 302px,#ff50a7 333px,#ff3586 370px,#ff1e6b 415px,#ff0e57 459px,#ff0047 511px,#ff0034 598px,#ff0024 706px)"></i>
<i style="background:linear-gradient(90deg,#00fffe 22px,#00ceff 152px,#71b4ff 212px,#ff92fd 280px,#ff6bce 306px,#ff4ca7 337px,#ff3186 374px,#ff1c6b 418px,#ff0d59 460px,#ff0049 509px,#ff0035 596px,#ff0025 704px)"></i>
<i style="background:linear-gradient(90deg,#00fbff 22px,#00caff 153px,#79adff 217px,#ff8dfe 282px,#ff69d0 307px,#ff4aa9 338px,#ff3088 375px,#ff1b6d 419px,#ff004b 507px,#ff0037 594px,#ff0027 702px)"></i>
<i style="background:linear-gradient(90deg,#00f6ff 23px,#00c5ff 153px,#78a9ff 218px,#ff89ff 284px,#ff65d0 310px,#ff48aa 340px,#ff2e89 377px,#ff196e 421px,#ff004d 505px,#ff0039 592px,#ff0028 700px)"></i>
<i style="background:linear-gradient(90deg,#00f2ff 24px,#00c1ff 154px,#75a5ff 218px,#ff83fd 287px,#ff61d0 313px,#f4a 343px,#ff2c8b 379px,#ff1870 423px,#ff0050 502px,#ff003b 589px,#ff0029 698px)"></i>
<i style="background:linear-gradient(90deg,#00edff 25px,#00bdff 154px,#76a0ff 220px,#ff7ffe 289px,#ff5dd1 315px,#ff42ab 345px,#ff2b8c 381px,#ff1771 424px,#ff0052 500px,#ff003c 587px,#ff002b 696px)"></i>
<i style="background:linear-gradient(90deg,#00e9ff 25px,#01b9ff 155px,#7b9bff 224px,#ff7bff 291px,#ff5ad2 317px,#ff40ad 347px,#ff298d 383px,#ff1572 426px,#f05 498px,#ff003e 585px,#ff002c 694px)"></i>
<i style="background:linear-gradient(90deg,#00e5ff 26px,#00b5ff 155px,#7598ff 222px,#ff76fe 294px,#ff56d1 320px,#ff3dad 350px,#ff278e 386px,#ff1474 428px,#ff0057 496px,#ff0040 583px,#ff002d 692px)"></i>
<i style="background:linear-gradient(90deg,#00e0ff 27px,#01b1ff 156px,#7a93ff 226px,#ff72fe 296px,#ff54d2 322px,#ff3aae 352px,#ff258f 388px,#ff1375 430px,#ff005a 493px,#ff0042 580px,#ff002f 690px)"></i>
<i style="background:linear-gradient(90deg,#00dcff 28px,#00adff 156px,#7b8fff 228px,#ff6eff 298px,#ff51d3 324px,#ff38af 354px,#ff2491 389px,#ff1276 431px,#ff005c 491px,#f04 578px,#ff0030 688px)"></i>
<i style="background:linear-gradient(90deg,#00d8ff 29px,#01a9ff 157px,#768cff 227px,#ff6afe 301px,#ff4ed4 326px,#ff36b0 356px,#ff2292 391px,#ff1077 433px,#ff005f 489px,#ff0045 576px,#ff0031 687px)"></i>
<i style="background:linear-gradient(90deg,#00d4ff 29px,#00a6ff 157px,#7988ff 230px,#ff66fe 303px,#ff4bd5 328px,#ff34b1 358px,#ff2093 393px,#ff0f79 435px,#ff0061 487px,#ff0047 574px,#ff0032 685px)"></i>
<i style="background:linear-gradient(90deg,#00d0ff 30px,#01a2ff 158px,#7c83ff 233px,#ff63ff 305px,#ff49d6 330px,#ff32b2 360px,#ff1e94 395px,#ff0e7a 436px,#ff0064 484px,#ff0049 572px,#ff0034 683px)"></i>
<i style="background:linear-gradient(90deg,#0cf 31px,#009fff 158px,#7881ff 232px,#ff5efe 308px,#ff45d6 333px,#ff2fb2 363px,#ff1c94 398px,#ff0d7b 438px,#ff0067 482px,#ff0053 541px,#ff0035 681px)"></i>
<i style="background:linear-gradient(90deg,#00c9ff 32px,#019cff 159px,#7a7dff 235px,#ff5bff 310px,#ff43d7 335px,#ff2db3 365px,#ff1b96 399px,#ff0c7d 439px,#ff0069 480px,#ff0054 541px,#ff0037 679px)"></i>
<i style="background:linear-gradient(90deg,#00c5ff 33px,#0098ff 159px,#7b79ff 237px,#ff58ff 312px,#ff3fd6 338px,#ff2bb4 367px,#ff1a97 401px,#ff0a7e 441px,#ff006d 477px,#ff0056 541px,#ff0038 677px)"></i>
<i style="background:linear-gradient(90deg,#00c2ff 33px,#0195ff 160px,#77f 236px,#ff54fe 315px,#ff3dd7 340px,#ff29b5 369px,#ff1898 403px,#ff097f 443px,#ff006f 475px,#ff0057 542px,#ff0039 675px)"></i>
<i style="background:linear-gradient(90deg,#00beff 34px,#0092ff 160px,#7a73ff 239px,#ff51ff 317px,#ff3ad8 342px,#ff27b6 371px,#ff1699 405px,#ff0881 444px,#ff0072 473px,#ff0059 542px,#ff003b 673px)"></i>
<i style="background:linear-gradient(90deg,#0bf 35px,#008fff 160px,#7970ff 240px,#ff4eff 319px,#ff38d9 344px,#ff25b7 373px,#ff159b 406px,#ff0782 445px,#ff0075 471px,#ff005a 542px,#ff003c 671px)"></i>
<i style="background:linear-gradient(90deg,#00b8ff 36px,#008cff 161px,#796dff 241px,#ff4afe 322px,#ff35d8 347px,#ff23b7 376px,#ff139b 409px,#ff0683 447px,#ff0078 469px,#ff005c 542px,#ff003e 669px)"></i>
<i style="background:linear-gradient(90deg,#00b4ff 37px,#008aff 161px,#786aff 242px,#ff47ff 324px,#ff33d9 349px,#ff22b9 377px,#ff129d 410px,#ff0585 448px,#ff007b 466px,#ff005d 542px,#ff003f 667px)"></i>
<i style="background:linear-gradient(90deg,#00b1ff 38px,#0087ff 162px,#7c66ff 246px,#f4f 326px,#ff30da 351px,#ff20ba 379px,#ff119e 412px,#ff0486 449px,#ff007e 464px,#ff005f 542px,#ff0041 665px)"></i>
<i style="background:linear-gradient(90deg,#00aeff 38px,#0084ff 162px,#7765ff 244px,#ff41fe 329px,#ff2ed9 354px,#ff1dba 382px,#ff0f9f 414px,#ff0387 451px,#ff0072 494px,#ff0060 543px,#ff0042 663px)"></i>
<i style="background:linear-gradient(90deg,#00abff 39px,#0081ff 163px,#7b61ff 248px,#ff3eff 331px,#ff2cdc 355px,#ff1cbc 383px,#ff0ea1 415px,#ff0289 452px,#ff0074 494px,#ff0062 542px,#f04 661px)"></i>
<i style="background:linear-gradient(90deg,#00a8ff 40px,#007fff 163px,#7a5eff 249px,#ff3bff 333px,#ff29db 358px,#ff1abc 386px,#ff0ca1 418px,#ff018a 454px,#ff0075 496px,#ff0063 543px,#ff0045 659px)"></i>
<i style="background:linear-gradient(90deg,#00a5ff 41px,#007cff 164px,#7a5cff 250px,#ff38fe 336px,#ff27dc 360px,#ff18bd 388px,#ff0ba3 419px,#ff008b 455px,#f07 496px,#ff0065 543px,#ff0047 657px)"></i>
<i style="background:linear-gradient(90deg,#00a2ff 42px,#007aff 164px,#7a59ff 252px,#ff36ff 338px,#ff25dd 362px,#ff16be 390px,#ff0aa4 421px,#ff008c 457px,#f06 544px,#ff0048 656px)"></i>
<i style="background:linear-gradient(90deg,#009fff 43px,#07f 165px,#7757ff 251px,#ff32fe 341px,#ff23dc 365px,#ff15bf 392px,#ff09a5 423px,#ff008e 458px,#ff0067 544px,#ff004a 654px)"></i>
<i style="background:linear-gradient(90deg,#009dff 44px,#0075ff 165px,#7954ff 254px,#ff30fe 343px,#ff21dd 367px,#ff13c0 394px,#ff0198 444px,#ff008f 459px,#ff0069 543px,#ff004c 652px)"></i>
<i style="background:linear-gradient(90deg,#009aff 45px,#0172ff 166px,#7d51ff 258px,#ff2eff 345px,#ff1fdf 368px,#ff12c1 395px,#ff009a 445px,#ff0091 460px,#ff006b 543px,#ff004d 650px)"></i>
<i style="background:linear-gradient(90deg,#0097ff 46px,#0070ff 166px,#7750ff 255px,#ff2bfe 348px,#ff1dde 371px,#ff10c1 398px,#ff009d 443px,#ff0092 462px,#ff006c 544px,#ff004f 648px)"></i>
<i style="background:linear-gradient(90deg,#0095ff 46px,#016eff 167px,#7a4dff 259px,#ff28fe 350px,#ff1bdf 373px,#ff0ec2 400px,#ff00a1 441px,#ff0093 463px,#ff006e 544px,#ff0050 646px)"></i>
<i style="background:linear-gradient(90deg,#0092ff 47px,#006cff 167px,#7c4aff 262px,#ff26ff 352px,#ff19e0 375px,#ff0dc4 401px,#ff00a5 439px,#ff0094 464px,#ff0070 543px,#ff0052 644px)"></i>
<i style="background:linear-gradient(90deg,#0090ff 48px,#0169ff 168px,#7849ff 260px,#ff23fe 355px,#ff17df 378px,#ff0bc4 404px,#ff00a8 437px,#ff0095 466px,#ff0071 544px,#ff0054 642px)"></i>
<i style="background:linear-gradient(90deg,#008dff 49px,#0068ff 168px,#7a46ff 263px,#ff21ff 357px,#ff15e0 380px,#ff0ac5 406px,#ff00ad 434px,#ff0097 467px,#ff0072 544px,#f05 640px)"></i>
<i style="background:linear-gradient(90deg,#008bff 50px,#0165ff 169px,#7c43ff 266px,#ff1fff 359px,#ff13e1 382px,#ff09c6 407px,#ff00b1 432px,#ff0098 468px,#ff0074 543px,#ff0057 638px)"></i>
<i style="background:linear-gradient(90deg,#08f 51px,#0063ff 169px,#7942ff 265px,#ff1dfe 362px,#ff11e0 385px,#ff07c6 410px,#ff00b5 430px,#ff009a 469px,#ff0076 543px,#ff0059 636px)"></i>
<i style="background:linear-gradient(90deg,#0086ff 52px,#0161ff 170px,#7b3fff 268px,#ff1bff 364px,#ff10e2 386px,#ff06c8 411px,#ff00b9 428px,#ff009b 470px,#f07 543px,#ff005b 634px)"></i>
<i style="background:linear-gradient(90deg,#0084ff 53px,#005fff 170px,#7d3dff 271px,#ff19ff 366px,#ff0bdc 394px,#ff00be 425px,#ff009d 471px,#ff0079 543px,#ff005c 632px)"></i>
<i style="background:linear-gradient(90deg,#0081ff 54px,#015dff 171px,#7a3cff 270px,#ff16fe 369px,#ff0bdf 394px,#ff00c2 423px,#ff009d 473px,#ff007b 543px,#ff005e 630px)"></i>
<i style="background:linear-gradient(90deg,#007fff 55px,#005cff 171px,#7c39ff 273px,#ff14ff 371px,#ff09e1 395px,#ff00c6 421px,#ff009f 473px,#ff007c 543px,#ff0060 628px)"></i>
<i style="background:linear-gradient(90deg,#007dff 56px,#005aff 171px,#7a38ff 273px,#ff12ff 373px,#ff09e3 395px,#ff00cb 419px,#ff00a1 474px,#ff007e 542px,#ff0062 626px)"></i>
<i style="background:linear-gradient(90deg,#007bff 57px,#0058ff 172px,#7936ff 274px,#ff10fe 376px,#ff00d0 416px,#ff00b8 444px,#ff00a2 476px,#ff0080 543px,#ff0064 625px)"></i>
<i style="background:linear-gradient(90deg,#0079ff 58px,#0056ff 172px,#7a34ff 276px,#ff0eff 378px,#ff00d5 414px,#ff00ba 444px,#ff00a3 477px,#ff0081 543px,#ff0065 623px)"></i>
<i style="background:linear-gradient(90deg,#0076ff 59px,#0054ff 173px,#7c31ff 279px,#ff0cff 380px,#ff00d9 412px,#ff00cd 425px,#ff00a5 478px,#ff0083 543px,#ff0067 621px)"></i>
<i style="background:linear-gradient(90deg,#0074ff 60px,#0053ff 173px,#7930ff 278px,#ff0afe 383px,#ff00df 409px,#ff00ce 426px,#ff00a6 479px,#ff0085 542px,#ff0069 619px)"></i>
<i style="background:linear-gradient(90deg,#0072ff 61px,#0051ff 174px,#7c2eff 282px,#ff09ff 385px,#ff00e4 407px,#ff00cf 428px,#ff00a7 480px,#ff0087 542px,#ff006b 617px)"></i>
<i style="background:linear-gradient(90deg,#0070ff 62px,#0050ff 174px,#7c2cff 283px,#ff07ff 387px,#ff00e9 405px,#ff00d0 430px,#ff00a9 481px,#f08 542px,#ff006d 615px)"></i>
<i style="background:linear-gradient(90deg,#006eff 63px,#004eff 175px,#7a2bff 283px,#ff05fe 390px,#f0e 403px,#ff00d0 432px,#f0a 482px,#ff008a 542px,#ff006f 613px)"></i>
<i style="background:linear-gradient(90deg,#006cff 64px,#004cff 175px,#7c29ff 286px,#ff03ff 392px,#ff00f4 401px,#ff00d1 434px,#ff00ab 483px,#ff008c 541px,#ff0071 611px)"></i>
<i style="background:linear-gradient(90deg,#006bff 65px,#004bff 176px,#7d27ff 288px,#ff02ff 394px,#ff00d2 436px,#ff00ad 484px,#ff008e 541px,#ff0073 609px)"></i>
<i style="background:linear-gradient(90deg,#0069ff 66px,#0049ff 176px,#7a26ff 287px,#f0f 397px,#ff00d3 437px,#ff00ae 485px,#ff008f 541px,#ff0075 607px)"></i>
<i style="background:linear-gradient(90deg,#0067ff 67px,#0147ff 177px,#7d24ff 291px,#f0f 399px,#ff00d4 439px,#ff00b0 485px,#ff0091 540px,#f07 605px)"></i>
<i style="background:linear-gradient(90deg,#0065ff 68px,#0046ff 177px,#7c22ff 292px,#f200ff 391px,#f0f 401px,#ff00d5 441px,#ff00b2 486px,#ff0093 540px,#ff0079 603px)"></i>
<i style="background:linear-gradient(90deg,#0063ff 69px,#0144ff 178px,#7b21ff 292px,#ed00ff 389px,#f0f 404px,#ff00d6 442px,#ff00b3 487px,#ff0095 540px,#ff007b 601px)"></i>
<i style="background:linear-gradient(90deg,#0061ff 70px,#0043ff 178px,#7c1fff 295px,#e800ff 387px,#f0f 406px,#ff00d7 444px,#ff00b4 488px,#ff0097 539px,#ff007e 599px)"></i>
<i style="background:linear-gradient(90deg,#0060ff 71px,#0142ff 179px,#6f22ff 284px,#e100ff 384px,#ff00fe 409px,#ff00d7 446px,#ff00b6 489px,#f09 539px,#ff0080 597px)"></i>
<i style="background:linear-gradient(90deg,#005eff 72px,#0040ff 179px,#6c21ff 283px,#dc00ff 382px,#f0f 411px,#ff00d8 448px,#ff00b7 490px,#ff009a 539px,#ff0082 595px)"></i>
<i style="background:linear-gradient(90deg,#005cff 73px,#013fff 180px,#6a20ff 282px,#d800ff 380px,#f0f 413px,#ff00d9 449px,#ff00b8 491px,#ff009c 539px,#ff0084 594px)"></i>
<i style="background:linear-gradient(90deg,#005bff 74px,#003eff 180px,#671fff 281px,#d300ff 378px,#ff00fe 416px,#ff00da 451px,#ff00ba 492px,#ff009e 539px,#ff0086 592px)"></i>
<i style="background:linear-gradient(90deg,#0059ff 76px,#013cff 181px,#651fff 280px,#cd00ff 375px,#f0f 418px,#ff00db 452px,#ff00bc 492px,#ff00a0 538px,#f08 590px)"></i>
<i style="background:linear-gradient(90deg,#0057ff 77px,#003bff 181px,#621eff 279px,#c900ff 373px,#f0f 420px,#ff00dc 454px,#ff00bd 493px,#ff00a2 537px,#ff008b 588px)"></i>
<i style="background:linear-gradient(90deg,#0056ff 78px,#003aff 181px,#5f1eff 277px,#c400ff 371px,#ff00fe 423px,#f0d 456px,#ff00be 494px,#ff00a4 537px,#ff008d 586px)"></i>
<i style="background:linear-gradient(90deg,#0054ff 79px,#0038ff 182px,#5e1dff 277px,#c000ff 369px,#f0f 425px,#f0d 458px,#ff00c0 495px,#ff00a6 537px,#ff008f 584px)"></i>
<i style="background:linear-gradient(90deg,#0052ff 80px,#0037ff 182px,#5b1cff 275px,#ba00ff 366px,#f0f 427px,#ff00df 459px,#ff00c2 495px,#ff00a8 536px,#ff0092 582px)"></i>
<i style="background:linear-gradient(90deg,#0051ff 81px,#0036ff 183px,#591cff 275px,#b600ff 364px,#ff00fe 430px,#ff00df 461px,#ff00c3 496px,#f0a 536px,#ff0094 580px)"></i>
<i style="background:linear-gradient(90deg,#004fff 82px,#0035ff 183px,#561bff 273px,#b200ff 362px,#f0f 432px,#ff00e0 463px,#ff00c4 497px,#ff00ac 535px,#ff0096 578px)"></i>
<i style="background:linear-gradient(90deg,#004eff 83px,#03f 184px,#561aff 274px,#ae00ff 360px,#f0f 434px,#ff00e1 464px,#ff00c6 497px,#ff00af 534px,#f09 576px)"></i>
<i style="background:linear-gradient(90deg,#004cff 85px,#0032ff 184px,#531aff 272px,#a900ff 357px,#fe00ff 436px,#ff00e1 467px,#ff00c7 499px,#ff009b 574px)"></i>
<i style="background:linear-gradient(90deg,#004bff 86px,#0031ff 185px,#5119ff 271px,#a500ff 355px,#f0f 439px,#ff00e3 467px,#ff00c9 499px,#ff009e 572px)"></i>
<i style="background:linear-gradient(90deg,#0049ff 87px,#0030ff 185px,#4f19ff 270px,#a100ff 353px,#f0f 441px,#ff00cb 499px,#ff00a1 570px)"></i>
<i style="background:linear-gradient(90deg,#0048ff 88px,#002fff 186px,#4e18ff 270px,#9d00ff 351px,#fe00ff 443px,#f0c 501px,#ff00a3 568px)"></i>
<i style="background:linear-gradient(90deg,#0047ff 89px,#002eff 186px,#90f 348px,#f0f 446px,#ff00ce 500px,#ff00a6 566px)"></i>
<i style="background:linear-gradient(90deg,#0045ff 90px,#012dff 187px,#9500ff 346px,#f0f 448px,#ff00d0 501px,#ff00a8 564px)"></i>
<i style="background:linear-gradient(90deg,#04f 91px,#002cff 187px,#9200ff 344px,#fe00ff 450px,#ff00d0 503px,#ff00ab 563px)"></i>
<i style="background:linear-gradient(90deg,#0042ff 93px,#012aff 188px,#8e00ff 342px,#f0f 453px,#ff00d3 502px,#ff00ad 561px)"></i>
<i style="background:linear-gradient(90deg,#0041ff 94px,#002aff 188px,#8a00ff 339px,#f0f 455px,#ff00d4 504px,#ff00b0 559px)"></i>
<i style="background:linear-gradient(90deg,#0040ff 95px,#0128ff 189px,#8600ff 337px,#fe00ff 457px,#ff00d5 505px,#ff00b3 557px)"></i>
<i style="background:linear-gradient(90deg,#003fff 96px,#0027ff 189px,#8300ff 335px,#f0f 460px,#ff00d8 504px,#ff00b6 555px)"></i>
<i style="background:linear-gradient(90deg,#003dff 97px,#0126ff 190px,#8000ff 333px,#f0f 462px,#ff00d9 505px,#ff00b9 553px)"></i>
<i style="background:linear-gradient(90deg,#003cff 98px,#0025ff 190px,#7c00ff 330px,#fe00ff 464px,#ff00da 506px,#ff00bc 551px)"></i>
<i style="background:linear-gradient(90deg,#003bff 100px,#0124ff 191px,#7800ff 328px,#f0f 467px,#ff00dc 506px,#ff00bf 549px)"></i>
<i style="background:linear-gradient(90deg,#0039ff 101px,#0024ff 191px,#7500ff 326px,#f0f 469px,#f0d 507px,#ff00c2 547px)"></i>
<i style="background:linear-gradient(90deg,#0038ff 102px,#0023ff 191px,#7200ff 324px,#f0f 472px,#ff00e0 506px,#ff00c5 545px)"></i>
<i style="background:linear-gradient(90deg,#0037ff 103px,#02f 192px,#6e00ff 321px,#f0f 474px,#ff00e2 507px,#ff00c8 543px)"></i>
<i style="background:linear-gradient(90deg,#0036ff 104px,#0021ff 192px,#6b00ff 319px,#fe00ff 476px,#ff00cb 541px)"></i>
<i style="background:linear-gradient(90deg,#0034ff 106px,#0020ff 193px,#6800ff 317px,#f0f 479px,#ff00ce 539px)"></i>
<i style="background:linear-gradient(90deg,#03f 107px,#001fff 193px,#60f 315px,#f0f 481px,#ff00d1 537px)"></i>
<i style="background:linear-gradient(90deg,#0032ff 108px,#001eff 194px,#6200ff 312px,#fe00ff 483px,#ff00d4 535px)"></i>
<i style="background:linear-gradient(90deg,#0031ff 109px,#001dff 194px,#5f00ff 310px,#f0f 486px,#ff00d8 533px)"></i>
<i style="background:linear-gradient(90deg,#0030ff 110px,#001cff 195px,#5c00ff 308px,#ac00ff 399px,#f0f 488px,#ff00da 532px)"></i>
<i style="background:linear-gradient(90deg,#002fff 112px,#001bff 195px,#5a00ff 306px,#a0f 399px,#fe00ff 490px,#ff00de 530px)"></i>
<i style="background:linear-gradient(90deg,#002eff 113px,#001aff 196px,#5600ff 303px,#a900ff 399px,#f0f 493px,#ff00e1 528px)"></i>
<i style="background:linear-gradient(90deg,#002dff 114px,#001aff 196px,#5400ff 301px,#a800ff 400px,#f0f 495px,#ff00e5 526px)"></i>
<i style="background:linear-gradient(90deg,#002cff 115px,#0019ff 197px,#5100ff 299px,#a700ff 400px,#fe00ff 497px,#ff00e8 524px)"></i>
<i style="background:linear-gradient(90deg,#002aff 117px,#0018ff 197px,#4f00ff 297px,#a500ff 400px,#f0f 500px,#ff00ec 522px)"></i>
<i style="background:linear-gradient(90deg,#0029ff 118px,#0117ff 198px,#4c00ff 295px,#a400ff 400px,#f0f 502px,#ff00f0 520px)"></i>
<i style="background:linear-gradient(90deg,#0028ff 119px,#0016ff 198px,#4900ff 292px,#a200ff 400px,#fe00ff 504px,#ff00f3 518px)"></i>
<i style="background:linear-gradient(90deg,#0027ff 120px,#0116ff 199px,#4600ff 290px,#a100ff 400px,#f0f 507px,#ff00f7 516px)"></i>
<i style="background:linear-gradient(90deg,#0026ff 122px,#0015ff 199px,#40f 288px,#a000ff 401px,#f0f 509px,#ff00fb 514px)"></i>
<i style="background:linear-gradient(90deg,#0025ff 123px,#0114ff 200px,#4100ff 285px,#9d00ff 399px,#f0f 512px)"></i>
<i style="background:linear-gradient(90deg,#0024ff 124px,#0013ff 200px,#3f00ff 283px,#9c00ff 399px,#fb00ff 510px)"></i>
<i style="background:linear-gradient(90deg,#0023ff 125px,#0112ff 201px,#3c00ff 281px,#9800ff 397px,#f700ff 508px)"></i>
<i style="background:linear-gradient(90deg,#02f 127px,#0012ff 201px,#3a00ff 279px,#9600ff 395px,#f400ff 506px)"></i>
<i style="background:linear-gradient(90deg,#0021ff 128px,#0111ff 202px,#3700ff 276px,#9200ff 392px,#f000ff 504px)"></i>
<i style="background:linear-gradient(90deg,#0020ff 129px,#0010ff 202px,#3500ff 274px,#8f00ff 390px,#ec00ff 502px)"></i>
<i style="background:linear-gradient(90deg,#001fff 130px,#0010ff 202px,#30f 272px,#8d00ff 389px,#e900ff 501px)"></i>
<i style="background:linear-gradient(90deg,#001eff 132px,#000fff 203px,#3100ff 270px,#8a00ff 387px,#e600ff 499px)"></i>
<i style="background:linear-gradient(90deg,#001dff 133px,#000eff 203px,#2e00ff 267px,#8600ff 384px,#e200ff 497px)"></i>
<i style="background:linear-gradient(90deg,#001dff 134px,#000eff 204px,#2c00ff 265px,#8400ff 382px,#df00ff 495px)"></i>
<i style="background:linear-gradient(90deg,#001bff 136px,#000dff 204px,#2a00ff 263px,#8100ff 380px,#db00ff 493px)"></i>
<i style="background:linear-gradient(90deg,#001bff 137px,#000cff 205px,#2800ff 261px,#7e00ff 378px,#d800ff 491px)"></i>
<i style="background:linear-gradient(90deg,#001aff 138px,#000cff 205px,#2500ff 258px,#7c00ff 376px,#d500ff 489px)"></i>
<i style="background:linear-gradient(90deg,#0019ff 140px,#000bff 206px,#2300ff 256px,#7900ff 374px,#d100ff 487px)"></i>
<i style="background:linear-gradient(90deg,#0018ff 141px,#000aff 206px,#2100ff 254px,#70f 372px,#ce00ff 485px)"></i>
<i style="background:linear-gradient(90deg,#0017ff 142px,#000aff 207px,#1f00ff 252px,#7300ff 369px,#cb00ff 483px)"></i>
<i style="background:linear-gradient(90deg,#0016ff 144px,#0009ff 207px,#1d00ff 249px,#7100ff 367px,#c800ff 481px)"></i>
<i style="background:linear-gradient(90deg,#0015ff 145px,#0008ff 208px,#1b00ff 247px,#6e00ff 365px,#c500ff 479px)"></i>
<i style="background:linear-gradient(90deg,#0014ff 147px,#0008ff 208px,#1900ff 245px,#6c00ff 363px,#c200ff 477px)"></i>
<i style="background:linear-gradient(90deg,#0014ff 148px,#0107ff 209px,#1700ff 243px,#6a00ff 361px,#bf00ff 475px)"></i>
<i style="background:linear-gradient(90deg,#0013ff 149px,#0007ff 209px,#1500ff 240px,#60f 358px,#bc00ff 473px)"></i>
<i style="background:linear-gradient(90deg,#0012ff 151px,#0106ff 210px,#1300ff 238px,#6500ff 357px,#b900ff 472px)"></i>
<i style="background:linear-gradient(90deg,#01f 152px,#0005ff 210px,#10f 236px,#6300ff 355px,#b600ff 470px)"></i>
<i style="background:linear-gradient(90deg,#0010ff 154px,#0105ff 211px,#1000ff 234px,#6000ff 353px,#b400ff 468px)"></i>
<i style="background:linear-gradient(90deg,#000fff 155px,#0004ff 211px,#0d00ff 231px,#5d00ff 350px,#b100ff 466px)"></i>
<i style="background:linear-gradient(90deg,#000fff 156px,#0004ff 211px,#0c00ff 229px,#5b00ff 348px,#ae00ff 464px)"></i>
<i style="background:linear-gradient(90deg,#000eff 158px,#0003ff 212px,#0a00ff 227px,#5400ff 339px,#ab00ff 462px)"></i>
<i style="background:linear-gradient(90deg,#000dff 159px,#0002ff 212px,#5300ff 338px,#a800ff 460px)"></i>
<i style="background:linear-gradient(90deg,#000cff 161px,#0002ff 213px,#5200ff 338px,#a600ff 458px)"></i>
<i style="background:linear-gradient(90deg,#000bff 162px,#0001ff 213px,#5000ff 337px,#a300ff 456px)"></i>
<i style="background:linear-gradient(90deg,#000aff 164px,#0001ff 214px,#4f00ff 336px,#a000ff 454px)"></i>
<i style="background:linear-gradient(90deg,#000aff 165px,#00f 214px,#4e00ff 335px,#9e00ff 452px)"></i>
<i style="background:linear-gradient(90deg,#0009ff 167px,#00f 215px,#9b00ff 450px)"></i>
<i style="background:linear-gradient(90deg,#0008ff 168px,#00f 215px,#90f 448px)"></i>
<i style="background:linear-gradient(90deg,#0007ff 170px,#00f 216px,#9600ff 446px)"></i>
<i style="background:linear-gradient(90deg,#0007ff 171px,#00f 216px,#9400ff 444px)"></i>
<i style="background:linear-gradient(90deg,#0006ff 173px,#00f 217px,#9100ff 442px)"></i>
<i style="background:linear-gradient(90deg,#0005ff 174px,#00f 217px,#8f00ff 441px)"></i>
<i style="background:linear-gradient(90deg,#0004ff 176px,#00f 218px,#8d00ff 439px)"></i>
<i style="background:linear-gradient(90deg,#0004ff 177px,#00f 218px,#8b00ff 437px)"></i>
<i style="background:linear-gradient(90deg,#0003ff 179px,#00f 219px,#80f 435px)"></i>
<i style="background:linear-gradient(90deg,#0002ff 181px,#00f 219px,#8600ff 433px)"></i>
<i style="background:linear-gradient(90deg,#0002ff 182px,#0100ff 220px,#8400ff 431px)"></i>
<i style="background:linear-gradient(90deg,#0001ff 184px,#00f 220px,#8100ff 429px)"></i>
<i style="background:linear-gradient(90deg,#00f 185px,#00f 220px,#7f00ff 427px)"></i>
<i style="background:linear-gradient(90deg,#00f 187px,#00f 221px,#7d00ff 425px)"></i>
<i style="background:linear-gradient(90deg,#00f 189px,#00f 221px,#7b00ff 423px)"></i>
<i style="background:linear-gradient(90deg,#00f 190px,#00f 222px,#7800ff 421px)"></i>
<i style="background:linear-gradient(90deg,#00f 192px,#00f 222px,#7600ff 419px)"></i>
<i style="background:linear-gradient(90deg,#00f 194px,#00f 223px,#7400ff 417px)"></i>
<i style="background:linear-gradient(90deg,#00f 195px,#00f 223px,#7200ff 415px)"></i>
<i style="background:linear-gradient(90deg,#00f 197px,#00f 224px,#7000ff 413px)"></i>
<i style="background:linear-gradient(90deg,#00f 199px,#00f 224px,#6e00ff 411px)"></i>
<i style="background:linear-gradient(90deg,#00f 201px,#00f 225px,#6d00ff 410px)"></i>
<i style="background:linear-gradient(90deg,#00f 202px,#00f 225px,#6a00ff 408px)"></i>
<i style="background:linear-gradient(90deg,#00f 204px,#00f 226px,#6800ff 406px)"></i>
<i style="background:linear-gradient(90deg,#00f 206px,#00f 226px,#6700ff 404px)"></i>
<i style="background:linear-gradient(90deg,#00f 208px,#00f 227px,#6500ff 402px)"></i>
<i style="background:linear-gradient(90deg,#00f 210px,#00f 227px,#6300ff 400px)"></i>
<i style="background:linear-gradient(90deg,#00f 212px,#00f 228px,#6100ff 398px)"></i>
<i style="background:linear-gradient(90deg,#00f 214px,#00f 228px,#5f00ff 396px)"></i>
<i style="background:linear-gradient(90deg,#00f 216px,#00f 229px,#5d00ff 394px)"></i>
<i style="background:linear-gradient(90deg,#00f 218px,#00f 229px,#5b00ff 392px)"></i>
<i style="background:linear-gradient(90deg,#00f 220px,#00f 230px,#5900ff 390px)"></i>
<i style="background:linear-gradient(90deg,#00f 222px,#00f 230px,#5700ff 388px)"></i>
<i style="background:linear-gradient(90deg,#00f 224px,#0100ff 231px,#5600ff 386px)"></i>
<i style="background:linear-gradient(90deg,#00f 226px,#5400ff 384px)"></i>
<i style="background:linear-gradient(90deg,#00f 228px,#5200ff 382px)"></i>
<i style="background:linear-gradient(90deg,#00f 230px,#5000ff 380px)"></i>
<i style="background:linear-gradient(90deg,#00f 232px,#4f00ff 379px)"></i>
<i style="background:linear-gradient(90deg,#0100ff 234px,#4d00ff 377px)"></i>
<i style="background:linear-gradient(90deg,#0200ff 237px,#4c00ff 375px)"></i>
<i style="background:linear-gradient(90deg,#0300ff 239px,#4a00ff 373px)"></i>
<i style="background:linear-gradient(90deg,#0400ff 241px,#4800ff 371px)"></i>
<i style="background:linear-gradient(90deg,#0500ff 244px,#4700ff 369px)"></i>
<i style="background:linear-gradient(90deg,#0600ff 246px,#4500ff 367px)"></i>
<i style="background:linear-gradient(90deg,#0600ff 248px,#40f 365px)"></i>
<i style="background:linear-gradient(90deg,#0700ff 250px,#4200ff 363px)"></i>
<i style="background:linear-gradient(90deg,#0800ff 253px,#4000ff 361px)"></i>
<i style="background:linear-gradient(90deg,#0900ff 255px,#3f00ff 359px)"></i>
<i style="background:linear-gradient(90deg,#0a00ff 258px,#3d00ff 357px)"></i>
<i style="background:linear-gradient(90deg,#0b00ff 260px,#3c00ff 355px)"></i>
<i style="background:linear-gradient(90deg,#0c00ff 263px,#3a00ff 353px)"></i>
<i style="background:linear-gradient(90deg,#0d00ff 265px,#3900ff 351px)"></i>
<i style="background:linear-gradient(90deg,#0e00ff 267px,#3700ff 349px)"></i>
<i style="background:linear-gradient(90deg,#0f00ff 270px,#3600ff 348px)"></i>
<i style="background:linear-gradient(90deg,#1000ff 272px,#3500ff 346px)"></i>
<i style="background:linear-gradient(90deg,#10f 275px,#30f 344px)"></i>
<i style="background:linear-gradient(90deg,#1200ff 277px,#3200ff 342px)"></i>
<i style="background:linear-gradient(90deg,#1300ff 280px,#3000ff 340px)"></i>
<i style="background:linear-gradient(90deg,#1300ff 282px,#2f00ff 338px)"></i>
<i style="background:linear-gradient(90deg,#1400ff 284px,#2d00ff 336px)"></i>
<i style="background:linear-gradient(90deg,#1500ff 287px,#2c00ff 334px)"></i>
<i style="background:linear-gradient(90deg,#1600ff 289px,#2b00ff 332px)"></i>
<i style="background:linear-gradient(90deg,#1600ff 291px,#2900ff 330px)"></i>
<i style="background:linear-gradient(90deg,#1800ff 294px,#2800ff 328px)"></i>
<i style="background:linear-gradient(90deg,#1800ff 296px,#2700ff 326px)"></i>
<i style="background:linear-gradient(90deg,#1900ff 299px,#2500ff 324px)"></i>
<i style="background:linear-gradient(90deg,#1a00ff 301px,#2400ff 322px)"></i>
<i style="background:linear-gradient(90deg,#1b00ff 304px,#2300ff 320px)"></i>
<i></i>
<i></i>
<i></i>
<i></i>
<i></i>
<i></i>
<i></i>
</div>
<div class="a" style="left:1172px;top:42px;width:735px;height:565px;background:rgba(0,0,0,.39);clip-path:path(evenodd,'M315.8,549.2 313.6,549.3 313.5,549.3 313.5,549.3 313.5,549.3 313.4,549.3 313.4,549.3 313.3,549.4 313.3,549.5 313.2,549.5 313.2,549.6 313.1,549.6 313.0,549.7 312.9,549.7 312.9,549.6 312.8,549.6 312.7,549.6 312.6,549.7 312.5,549.8 312.4,549.8 312.3,549.9 312.2,550.0 312.1,550.0 312.0,550.0 311.9,550.0 311.7,550.0 311.6,550.0 311.5,550.0 311.3,550.0 311.1,550.0 311.0,550.0 310.8,550.0 310.6,550.0 310.4,550.0 310.3,550.0 310.0,550.0 309.8,550.0 309.5,549.9 309.2,549.7 308.8,549.6 308.4,549.3 307.9,549.1 307.4,548.7 306.8,548.4 306.2,547.9 305.5,547.5 304.8,546.9 304.0,546.4 303.2,545.8 302.4,545.1 301.5,544.4 300.5,543.6 299.4,542.8 298.3,541.8 297.0,540.8 295.7,539.8 294.3,538.6 292.9,537.4 291.4,536.1 289.9,534.8 288.3,533.4 286.5,531.9 284.8,530.4 282.9,528.9 281.0,527.3 278.9,525.6 276.7,523.8 274.3,521.8 271.9,519.8 269.3,517.7 266.6,515.5 263.8,513.1 260.9,510.7 257.9,508.3 254.8,505.7 251.6,503.0 248.2,500.1 244.7,497.0 241.0,493.8 237.2,490.3 233.3,486.7 229.1,482.8 224.9,478.7 220.6,474.5 216.1,470.0 211.3,465.0 206.2,459.3 200.7,453.0 194.9,446.2 188.7,438.8 182.4,430.9 175.8,422.5 169.0,413.5 162.0,403.9 154.7,393.8 147.4,383.2 139.9,372.1 132.3,360.4 124.5,348.1 116.6,335.4 108.7,322.4 101.0,309.3 93.2,296.1 85.5,282.4 77.8,268.7 70.4,255.0 63.5,241.5 56.9,228.1 50.7,214.8 44.8,201.6 39.3,188.7 34.2,176.4 29.4,164.5 25.1,153.0 21.1,141.9 17.5,131.4 14.3,121.5 11.5,112.2 9.1,103.5 7.1,95.4 5.4,87.8 4.0,80.7 2.9,74.0 2.1,68.0 1.7,62.4 1.5,57.2 1.5,52.3 1.8,47.7 2.4,43.5 3.2,39.6 4.2,36.0 5.4,32.7 6.9,29.7 8.6,27.0 10.5,24.5 12.6,22.3 14.8,20.3 17.1,18.6 19.7,17.2 22.3,16.0 25.1,14.9 28.0,14.0 31.0,13.3 34.1,12.7 37.2,12.3 40.5,12.0 43.8,11.7 47.1,11.4 50.5,11.3 54.0,11.2 57.4,11.1 60.9,11.1 64.4,11.1 67.8,11.1 71.3,11.2 74.8,11.2 78.4,11.3 81.9,11.4 85.5,11.6 89.1,11.8 92.8,12.0 96.6,12.2 100.4,12.4 104.2,12.7 108.1,13.0 112.1,13.3 116.2,13.6 120.3,13.9 124.5,14.3 128.7,14.7 133.0,15.1 137.5,15.5 142.0,16.0 146.6,16.4 151.2,16.9 156.0,17.4 160.9,17.9 165.9,18.4 170.9,19.0 176.1,19.5 181.4,20.1 186.8,20.7 192.4,21.3 198.0,21.9 203.7,22.6 209.6,23.2 215.5,23.9 221.6,24.6 227.9,25.3 234.2,26.0 240.7,26.8 247.3,27.5 254.1,28.3 260.9,29.1 267.9,29.9 275.0,30.7 282.2,31.5 289.6,32.4 297.1,33.3 304.7,34.1 312.5,35.0 320.3,35.9 328.3,36.9 336.4,37.8 344.7,38.8 353.0,39.7 361.4,40.7 369.9,41.7 378.6,42.7 387.3,43.7 396.1,44.7 404.9,45.7 413.8,46.7 422.7,47.8 431.7,48.8 440.7,49.8 449.5,50.9 458.3,51.9 467.0,52.9 475.6,53.9 484.2,54.9 492.8,55.9 501.4,56.9 509.9,57.8 518.4,58.8 526.8,59.8 534.9,60.7 542.9,61.6 550.7,62.5 558.3,63.4 565.8,64.3 573.1,65.1 580.2,65.9 587.1,66.7 593.9,67.5 600.4,68.3 606.8,69.0 612.9,69.7 618.9,70.4 624.6,71.1 630.1,71.7 635.5,72.3 640.7,72.9 645.6,73.5 650.4,74.0 655.0,74.6 659.5,75.1 663.6,75.6 667.3,76.0 671.0,76.4 675.0,76.9 679.8,77.4 685.7,78.1 692.4,78.9 699.5,79.7 706.3,80.5 712.2,81.2 717.3,81.8 722.0,82.3 726.2,82.8 730.0,83.2 733.6,83.6 736.7,84.0 739.3,84.3 741.7,84.6 744.0,84.8 746.2,85.1 748.7,85.4 751.1,85.7 753.4,85.9 755.5,86.2 757.3,86.4 758.6,86.5 759.7,86.7 760.5,86.7 761.1,86.8 761.5,86.9 764.1,86.9Z M606.3,68.4 120.2,19.2 214.1,415.4Z')"></div>
<div class="a" style="left:1165px;top:607px;width:6px;height:2px;background:#dcdcdc;"></div>
<span class="t" style="left:1154.62px;top:599.63px;font-size:16.5px;transform:scaleX(1.000);color:#d6d6d6;">0</span>
<div class="a" style="left:1171px;top:608px;width:2px;height:6px;background:#dcdcdc;"></div>
<span class="t" style="left:1167.08px;top:617.76px;font-size:16px;transform:scaleX(1.050);color:#d6d6d6;">0</span>
<div class="a" style="left:1165px;top:560px;width:6px;height:2px;background:#dcdcdc;"></div>
<span class="t" style="left:1131.69px;top:552.53px;font-size:16.5px;transform:scaleX(1.000);color:#d6d6d6;">0.05</span>
<div class="a" style="left:1232px;top:608px;width:2px;height:6px;background:#dcdcdc;"></div>
<span class="t" style="left:1216.5px;top:617.76px;font-size:16px;transform:scaleX(1.050);color:#d6d6d6;">0.05</span>
<div class="a" style="left:1165px;top:512px;width:6px;height:2px;background:#dcdcdc;"></div>
<span class="t" style="left:1140.86px;top:505.43px;font-size:16.5px;transform:scaleX(1.000);color:#d6d6d6;">0.1</span>
<div class="a" style="left:1293px;top:608px;width:2px;height:6px;background:#dcdcdc;"></div>
<span class="t" style="left:1282.27px;top:617.76px;font-size:16px;transform:scaleX(1.050);color:#d6d6d6;">0.1</span>
<div class="a" style="left:1165px;top:465px;width:6px;height:2px;background:#dcdcdc;"></div>
<span class="t" style="left:1131.69px;top:458.33px;font-size:16.5px;transform:scaleX(1.000);color:#d6d6d6;">0.15</span>
<div class="a" style="left:1354px;top:608px;width:2px;height:6px;background:#dcdcdc;"></div>
<span class="t" style="left:1338.7px;top:617.76px;font-size:16px;transform:scaleX(1.050);color:#d6d6d6;">0.15</span>
<div class="a" style="left:1165px;top:418px;width:6px;height:2px;background:#dcdcdc;"></div>
<span class="t" style="left:1140.86px;top:411.23px;font-size:16.5px;transform:scaleX(1.000);color:#d6d6d6;">0.2</span>
<div class="a" style="left:1415px;top:608px;width:2px;height:6px;background:#dcdcdc;"></div>
<span class="t" style="left:1404.47px;top:617.76px;font-size:16px;transform:scaleX(1.050);color:#d6d6d6;">0.2</span>
<div class="a" style="left:1165px;top:371px;width:6px;height:2px;background:#dcdcdc;"></div>
<span class="t" style="left:1131.69px;top:364.13px;font-size:16.5px;transform:scaleX(1.000);color:#d6d6d6;">0.25</span>
<div class="a" style="left:1476px;top:608px;width:2px;height:6px;background:#dcdcdc;"></div>
<span class="t" style="left:1460.9px;top:617.76px;font-size:16px;transform:scaleX(1.050);color:#d6d6d6;">0.25</span>
<div class="a" style="left:1165px;top:324px;width:6px;height:2px;background:#dcdcdc;"></div>
<span class="t" style="left:1140.86px;top:317.03px;font-size:16.5px;transform:scaleX(1.000);color:#d6d6d6;">0.3</span>
<div class="a" style="left:1537px;top:608px;width:2px;height:6px;background:#dcdcdc;"></div>
<span class="t" style="left:1526.67px;top:617.76px;font-size:16px;transform:scaleX(1.050);color:#d6d6d6;">0.3</span>
<div class="a" style="left:1165px;top:277px;width:6px;height:2px;background:#dcdcdc;"></div>
<span class="t" style="left:1131.69px;top:269.93px;font-size:16.5px;transform:scaleX(1.000);color:#d6d6d6;">0.35</span>
<div class="a" style="left:1598px;top:608px;width:2px;height:6px;background:#dcdcdc;"></div>
<span class="t" style="left:1583.1px;top:617.76px;font-size:16px;transform:scaleX(1.050);color:#d6d6d6;">0.35</span>
<div class="a" style="left:1165px;top:230px;width:6px;height:2px;background:#dcdcdc;"></div>
<span class="t" style="left:1140.86px;top:222.83px;font-size:16.5px;transform:scaleX(1.000);color:#d6d6d6;">0.4</span>
<div class="a" style="left:1660px;top:608px;width:2px;height:6px;background:#dcdcdc;"></div>
<span class="t" style="left:1648.87px;top:617.76px;font-size:16px;transform:scaleX(1.050);color:#d6d6d6;">0.4</span>
<div class="a" style="left:1165px;top:183px;width:6px;height:2px;background:#dcdcdc;"></div>
<span class="t" style="left:1131.69px;top:175.73px;font-size:16.5px;transform:scaleX(1.000);color:#d6d6d6;">0.45</span>
<div class="a" style="left:1721px;top:608px;width:2px;height:6px;background:#dcdcdc;"></div>
<span class="t" style="left:1705.3px;top:617.76px;font-size:16px;transform:scaleX(1.050);color:#d6d6d6;">0.45</span>
<div class="a" style="left:1165px;top:136px;width:6px;height:2px;background:#dcdcdc;"></div>
<span class="t" style="left:1140.86px;top:128.63px;font-size:16.5px;transform:scaleX(1.000);color:#d6d6d6;">0.5</span>
<div class="a" style="left:1782px;top:608px;width:2px;height:6px;background:#dcdcdc;"></div>
<span class="t" style="left:1771.07px;top:617.76px;font-size:16px;transform:scaleX(1.050);color:#d6d6d6;">0.5</span>
<div class="a" style="left:1165px;top:88px;width:6px;height:2px;background:#dcdcdc;"></div>
<span class="t" style="left:1131.69px;top:81.53px;font-size:16.5px;transform:scaleX(1.000);color:#d6d6d6;">0.55</span>
<div class="a" style="left:1843px;top:608px;width:2px;height:6px;background:#dcdcdc;"></div>
<span class="t" style="left:1827.5px;top:617.76px;font-size:16px;transform:scaleX(1.050);color:#d6d6d6;">0.55</span>
<span class="t" style="left:1470.8px;top:21.91px;font-size:17px;transform:scaleX(0.967);color:#d6d6d6;">CIE 1976 u'v'</span>
<div class="a" style="left:1613px;top:570px;width:289px;height:31px;background:#333;"></div>
<span class="t" style="left:1614px;top:575.6px;font-size:21.5px;transform:scaleX(1.055);color:#f2f2f2;">Gamut Coverage:</span>
<span class="t" style="left:1805.8px;top:575.6px;font-size:21.5px;transform:scaleX(1.004);color:#f2f2f2;">100%</span>
<svg class="a" style="left:0;top:0" width="1920" height="660" viewBox="0 0 1920 660" fill="none"><rect x="1284.25" y="53.75" width="15" height="15" stroke="#fff" stroke-width="1.6"/><rect x="1414.00" y="66.25" width="15" height="15" stroke="#fff" stroke-width="1.6"/><rect x="1311.00" y="171.75" width="15" height="15" stroke="#fff" stroke-width="1.6"/><rect x="1771.00" y="102.50" width="15" height="15" stroke="#fff" stroke-width="1.6"/><rect x="1561.50" y="288.50" width="15" height="15" stroke="#fff" stroke-width="1.6"/><rect x="1378.25" y="449.75" width="15" height="15" stroke="#fff" stroke-width="1.6"/><rect x="1405.75" y="157.75" width="14" height="14" stroke="#000" stroke-width="2"/><circle cx="1277.5" cy="58" r="4.6" fill="#00a000" stroke="#000" stroke-width="1.3"/><circle cx="1424.5" cy="74" r="4.6" fill="#b0b000" stroke="#000" stroke-width="1.3"/><circle cx="1307.5" cy="182" r="4.6" fill="#00b4b4" stroke="#000" stroke-width="1.3"/><circle cx="1776.75" cy="109.5" r="4.6" fill="#c80000" stroke="#000" stroke-width="1.3"/><circle cx="1583" cy="296" r="4.6" fill="#8c008c" stroke="#000" stroke-width="1.3"/><circle cx="1381.25" cy="488.75" r="4.6" fill="#0000a0" stroke="#000" stroke-width="1.3"/><circle cx="1416.5" cy="166.25" r="4.6" fill="#fff" stroke="#000" stroke-width="1.3"/></svg>
<div class="a" style="left:410px;top:691px;width:289px;height:210px;background:#232323;border:2px solid #8a8a8a;box-sizing:border-box"></div>
<div class="a" style="left:404px;top:713px;width:6px;height:2px;background:#dcdcdc;"></div>
<span class="t" style="left:377.1px;top:706.26px;font-size:16px;transform:scaleX(1.000);color:#d6d6d6;">104</span>
<div class="a" style="left:404px;top:755px;width:6px;height:2px;background:#dcdcdc;"></div>
<span class="t" style="left:377.1px;top:748.26px;font-size:16px;transform:scaleX(1.000);color:#d6d6d6;">102</span>
<div class="a" style="left:404px;top:796px;width:6px;height:2px;background:#dcdcdc;"></div>
<span class="t" style="left:377.1px;top:789.06px;font-size:16px;transform:scaleX(1.000);color:#d6d6d6;">100</span>
<div class="a" style="left:404px;top:838px;width:6px;height:2px;background:#dcdcdc;"></div>
<span class="t" style="left:386px;top:831.26px;font-size:16px;transform:scaleX(1.000);color:#d6d6d6;">98</span>
<div class="a" style="left:404px;top:879px;width:6px;height:2px;background:#dcdcdc;"></div>
<span class="t" style="left:386px;top:872.26px;font-size:16px;transform:scaleX(1.000);color:#d6d6d6;">96</span>
<div class="a" style="left:410px;top:901px;width:2px;height:6px;background:#dcdcdc;"></div>
<div class="a" style="left:697px;top:901px;width:2px;height:6px;background:#dcdcdc;"></div>
<svg class="a" style="left:410px;top:690px" width="290" height="212" viewBox="410 690 290 212"><path d="M412,714.1H697M412,756.1H697M412,796.9H697M412,839.1H697M412,880.1H697" stroke="#8c8c8c" stroke-width="1.7" fill="none"/></svg>
<div class="a" style="left:439.3px;top:757.5px;width:75.7px;height:142px;background:linear-gradient(#ff5c5c,#ff3636);border:1.5px solid #000;border-bottom:0;box-sizing:border-box"></div>
<div class="a" style="left:515px;top:812px;width:77.5px;height:87.5px;background:linear-gradient(#5cae5c,#44a244);border:1.5px solid #000;border-bottom:0;box-sizing:border-box"></div>
<div class="a" style="left:592.5px;top:777.5px;width:75.8px;height:122px;background:linear-gradient(#5c5cff,#3838ff);border:1.5px solid #000;border-bottom:0;box-sizing:border-box"></div>
<span class="t" style="left:490px;top:672.33px;font-size:16.5px;transform:scaleX(0.955);color:#d6d6d6;">RGB Balance</span>
<span class="t" style="left:533px;top:904.33px;font-size:16.5px;transform:scaleX(1.032);color:#d6d6d6;">100W</span>
<div class="a" style="left:733px;top:682px;width:392px;height:228px;background:radial-gradient(ellipse 75% 95% at 195px 113px,#fff 0,rgba(255,255,255,.88) 8%,rgba(255,255,255,.48) 35%,rgba(255,255,255,.12) 70%,rgba(255,255,255,0) 100%),conic-gradient(from 0deg at 195px 113px,#b0ffbc 0deg,#dcffbc 28deg,#ffffc0 48deg,#ffd4a8 68deg,#ffb0a8 95deg,#ff84b0 125deg,#ffa0d4 155deg,#ffbcff 178deg,#d4bcff 203deg,#a4c4ff 228deg,#9ce0ff 248deg,#98ffff 266deg,#84ffcc 303deg,#94ffc0 335deg,#b0ffbc 360deg);border:1px solid #9a9a9a;box-sizing:border-box"></div>
<span class="t" style="left:885px;top:662.21px;font-size:17px;transform:scaleX(0.939);color:#d6d6d6;">CIE 1931 xy</span>
<svg class="a" style="left:733px;top:682px" width="392" height="228" viewBox="733 682 392 228"><rect x="919.6" y="787" width="16" height="16" fill="#fff" stroke="#000" stroke-width="2.2"/><circle cx="950.4" cy="818.9" r="4.6" fill="#fff" stroke="#000" stroke-width="1.2"/><circle cx="941.5" cy="824" r="4.6" fill="#b0b0b0" stroke="#000" stroke-width="1.2"/></svg>
<div class="a" style="left:1145.5px;top:665.5px;width:727.5px;height:232px;overflow:hidden;background:#444">
<div class="a" style="left:0;top:0;width:728px;height:38.3px;background:linear-gradient(#3a3a3a 0,#2c2c2c 50%,#111 50%,#181818 100%)"></div>
<span class="t" style="left:104.5px;top:9.15px;font-size:20.5px;transform:scaleX(0.916);color:#fff;-webkit-text-stroke:.35px #fff;">White</span>
<span class="t" style="left:195.75px;top:9.15px;font-size:20.5px;transform:scaleX(0.798);color:#fff;-webkit-text-stroke:.35px #fff;">Red</span>
<span class="t" style="left:275.75px;top:9.15px;font-size:20.5px;transform:scaleX(0.856);color:#fff;-webkit-text-stroke:.35px #fff;">Green</span>
<span class="t" style="left:367px;top:9.15px;font-size:20.5px;transform:scaleX(0.853);color:#fff;-webkit-text-stroke:.35px #fff;">Blue</span>
<span class="t" style="left:447px;top:9.15px;font-size:20.5px;transform:scaleX(0.823);color:#fff;-webkit-text-stroke:.35px #fff;">Cyan</span>
<span class="t" style="left:538.1px;top:9.15px;font-size:20.5px;transform:scaleX(0.886);color:#fff;-webkit-text-stroke:.35px #fff;">Magenta</span>
<span class="t" style="left:620.1px;top:9.15px;font-size:20.5px;transform:scaleX(0.868);color:#fff;-webkit-text-stroke:.35px #fff;">Yellow</span>
<span class="t" style="left:710.7px;top:9.15px;font-size:20.5px;transform:scaleX(0.822);color:#fff;-webkit-text-stroke:.35px #fff;">100W</span>
<div class="a" style="left:16.5px;top:38.3px;width:712px;height:35.8px;background:#444"></div>
<span class="t" style="left:21.5px;top:45.4px;font-size:22.8px;transform:scaleX(0.764);color:#f2f2f2;">x: CIE31</span>
<span class="t" style="left:104.5px;top:45.4px;font-size:22.8px;transform:scaleX(0.820);color:#f2f2f2;">0.3143</span>
<span class="t" style="left:195.75px;top:45.4px;font-size:22.8px;transform:scaleX(0.820);color:#f2f2f2;">0.6795</span>
<span class="t" style="left:275.75px;top:45.4px;font-size:22.8px;transform:scaleX(0.820);color:#f2f2f2;">0.2419</span>
<span class="t" style="left:367px;top:45.4px;font-size:22.8px;transform:scaleX(0.820);color:#f2f2f2;">0.1402</span>
<span class="t" style="left:447px;top:45.4px;font-size:22.8px;transform:scaleX(0.820);color:#f2f2f2;">0.1830</span>
<span class="t" style="left:538.1px;top:45.4px;font-size:22.8px;transform:scaleX(0.820);color:#f2f2f2;">0.3462</span>
<span class="t" style="left:620.1px;top:45.4px;font-size:22.8px;transform:scaleX(0.820);color:#f2f2f2;">0.4423</span>
<span class="t" style="left:710.7px;top:45.4px;font-size:22.8px;transform:scaleX(0.820);color:#f2f2f2;">0.3156</span>
<div class="a" style="left:16.5px;top:73.9px;width:712px;height:35.8px;background:#818181"></div>
<span class="t" style="left:21.5px;top:81px;font-size:22.8px;transform:scaleX(0.764);color:#f2f2f2;">y: CIE31</span>
<span class="t" style="left:104.5px;top:81px;font-size:22.8px;transform:scaleX(0.820);color:#f2f2f2;">0.3230</span>
<span class="t" style="left:195.75px;top:81px;font-size:22.8px;transform:scaleX(0.820);color:#f2f2f2;">0.3203</span>
<span class="t" style="left:275.75px;top:81px;font-size:22.8px;transform:scaleX(0.820);color:#f2f2f2;">0.7168</span>
<span class="t" style="left:367px;top:81px;font-size:22.8px;transform:scaleX(0.820);color:#f2f2f2;">0.0454</span>
<span class="t" style="left:447px;top:81px;font-size:22.8px;transform:scaleX(0.820);color:#f2f2f2;">0.3278</span>
<span class="t" style="left:538.1px;top:81px;font-size:22.8px;transform:scaleX(0.820);color:#f2f2f2;">0.1504</span>
<span class="t" style="left:620.1px;top:81px;font-size:22.8px;transform:scaleX(0.820);color:#f2f2f2;">0.5352</span>
<span class="t" style="left:710.7px;top:81px;font-size:22.8px;transform:scaleX(0.820);color:#f2f2f2;">0.3240</span>
<div class="a" style="left:16.5px;top:109.5px;width:712px;height:35.8px;background:#444"></div>
<span class="t" style="left:21.5px;top:116.6px;font-size:22.8px;transform:scaleX(0.690);color:#f2f2f2;">Y</span>
<span class="t" style="left:104.5px;top:116.6px;font-size:22.8px;transform:scaleX(0.820);color:#f2f2f2;">237.6042</span>
<span class="t" style="left:195.75px;top:116.6px;font-size:22.8px;transform:scaleX(0.820);color:#f2f2f2;">63.7279</span>
<span class="t" style="left:275.75px;top:116.6px;font-size:22.8px;transform:scaleX(0.820);color:#f2f2f2;">171.5041</span>
<span class="t" style="left:367px;top:116.6px;font-size:22.8px;transform:scaleX(0.820);color:#f2f2f2;">14.3997</span>
<span class="t" style="left:447px;top:116.6px;font-size:22.8px;transform:scaleX(0.820);color:#f2f2f2;">176.9836</span>
<span class="t" style="left:538.1px;top:116.6px;font-size:22.8px;transform:scaleX(0.820);color:#f2f2f2;">77.6904</span>
<span class="t" style="left:620.1px;top:116.6px;font-size:22.8px;transform:scaleX(0.820);color:#f2f2f2;">229.0179</span>
<span class="t" style="left:710.7px;top:116.6px;font-size:22.8px;transform:scaleX(0.820);color:#f2f2f2;">458.6300</span>
<div class="a" style="left:16.5px;top:145.1px;width:712px;height:35.8px;background:#818181"></div>
<span class="t" style="left:21.5px;top:152.3px;font-size:22.8px;transform:scaleX(0.820);color:#f2f2f2;">Target Y</span>
<span class="t" style="left:104.5px;top:152.3px;font-size:22.8px;transform:scaleX(0.820);color:#f2f2f2;">229.2192</span>
<span class="t" style="left:195.75px;top:152.3px;font-size:22.8px;transform:scaleX(0.820);color:#f2f2f2;">52.4887</span>
<span class="t" style="left:275.75px;top:152.3px;font-size:22.8px;transform:scaleX(0.820);color:#f2f2f2;">158.5580</span>
<span class="t" style="left:367px;top:152.3px;font-size:22.8px;transform:scaleX(0.820);color:#f2f2f2;">18.1725</span>
<span class="t" style="left:447px;top:152.3px;font-size:22.8px;transform:scaleX(0.820);color:#f2f2f2;">176.7305</span>
<span class="t" style="left:538.1px;top:152.3px;font-size:22.8px;transform:scaleX(0.820);color:#f2f2f2;">70.6612</span>
<span class="t" style="left:620.1px;top:152.3px;font-size:22.8px;transform:scaleX(0.820);color:#f2f2f2;">211.0466</span>
<span class="t" style="left:710.7px;top:152.3px;font-size:22.8px;transform:scaleX(0.820);color:#f2f2f2;">458.6300</span>
<div class="a" style="left:16.5px;top:180.7px;width:712px;height:35.8px;background:#444"></div>
<span class="t" style="left:21.5px;top:187.9px;font-size:22.8px;transform:scaleX(0.811);color:#f2f2f2;">ΔE 2000</span>
<span class="t" style="left:104.5px;top:187.9px;font-size:22.8px;transform:scaleX(0.820);color:#f2f2f2;">4.5604</span>
<span class="t" style="left:195.75px;top:187.9px;font-size:22.8px;transform:scaleX(0.820);color:#f2f2f2;">3.7336</span>
<span class="t" style="left:275.75px;top:187.9px;font-size:22.8px;transform:scaleX(0.820);color:#f2f2f2;">3.0109</span>
<span class="t" style="left:367px;top:187.9px;font-size:22.8px;transform:scaleX(0.820);color:#f2f2f2;">3.2281</span>
<span class="t" style="left:447px;top:187.9px;font-size:22.8px;transform:scaleX(0.820);color:#f2f2f2;">2.3509</span>
<span class="t" style="left:538.1px;top:187.9px;font-size:22.8px;transform:scaleX(0.820);color:#f2f2f2;">2.4441</span>
<span class="t" style="left:620.1px;top:187.9px;font-size:22.8px;transform:scaleX(0.820);color:#f2f2f2;">2.2290</span>
<span class="t" style="left:710.7px;top:187.9px;font-size:22.8px;transform:scaleX(0.820);color:#f2f2f2;">5.5400</span>
<div class="a" style="left:16.5px;top:216.3px;width:712px;height:35.8px;background:#818181"></div>
<span class="t" style="left:21.5px;top:223.6px;font-size:22.8px;transform:scaleX(0.803);color:#f2f2f2;">ΔE ITP</span>
<span class="t" style="left:104.5px;top:223.6px;font-size:22.8px;transform:scaleX(0.820);color:#f2f2f2;">4.6025</span>
<span class="t" style="left:195.75px;top:223.6px;font-size:22.8px;transform:scaleX(0.820);color:#f2f2f2;">13.0981</span>
<span class="t" style="left:275.75px;top:223.6px;font-size:22.8px;transform:scaleX(0.820);color:#f2f2f2;">11.0210</span>
<span class="t" style="left:367px;top:223.6px;font-size:22.8px;transform:scaleX(0.820);color:#f2f2f2;">20.8313</span>
<span class="t" style="left:447px;top:223.6px;font-size:22.8px;transform:scaleX(0.820);color:#f2f2f2;">11.7165</span>
<span class="t" style="left:538.1px;top:223.6px;font-size:22.8px;transform:scaleX(0.820);color:#f2f2f2;">15.0397</span>
<span class="t" style="left:620.1px;top:223.6px;font-size:22.8px;transform:scaleX(0.820);color:#f2f2f2;">7.3580</span>
<span class="t" style="left:710.7px;top:223.6px;font-size:22.8px;transform:scaleX(0.820);color:#f2f2f2;">3.5000</span>
<div class="a" style="left:0;top:0;width:16.5px;height:38.3px;background:#000"></div>
<div class="a" style="left:0;top:38.3px;width:16.5px;height:194px;background:repeating-linear-gradient(#333 0,#222 35.6px)"></div>
</div>
<div class="a" style="left:1162px;top:899.5px;width:711px;height:19.5px;background:#555;border-radius:3px"></div>
<div class="a" style="left:1163px;top:900.5px;width:17px;height:17.5px;background:#8a8a8a;border-radius:3px"></div>
<div class="a" style="left:1855px;top:900.5px;width:17px;height:17.5px;background:#8a8a8a;border-radius:3px"></div>
<div class="a" style="left:1184.5px;top:901.5px;width:607.5px;height:15.5px;background:#3a3a3a;border-radius:8px"></div>
<svg class="a" style="left:1166px;top:903px" width="12" height="13" viewBox="0 0 12 13"><path d="M9,0.5V12.5L1.5,6.5Z" fill="#444"/></svg>
<svg class="a" style="left:1858px;top:903px" width="12" height="13" viewBox="0 0 12 13"><path d="M3,0.5V12.5L10.5,6.5Z" fill="#444"/></svg>
<div class="a" style="left:1874px;top:704px;width:19px;height:194px;background:#555;border-radius:3px"></div>
<div class="a" style="left:1875px;top:705px;width:17px;height:17px;background:#8a8a8a;border-radius:3px"></div>
<div class="a" style="left:1875px;top:880px;width:17px;height:17px;background:#8a8a8a;border-radius:3px"></div>
<div class="a" style="left:1876px;top:729px;width:15px;height:118px;background:#3a3a3a;border-radius:8px"></div>
<svg class="a" style="left:1877px;top:708px" width="13" height="11" viewBox="0 0 13 11"><path d="M0.5,9.5H12.5L6.5,2Z" fill="#444"/></svg>
<svg class="a" style="left:1877px;top:883px" width="13" height="11" viewBox="0 0 13 11"><path d="M0.5,1.5H12.5L6.5,9Z" fill="#444"/></svg>
<div class="a" style="left:0px;top:1043px;width:1920px;height:63px;background:linear-gradient(#4a4a4a 0,#383838 35%,#2e2e2e 100%);"></div>
<div class="a" style="left:2px;top:1043.3px;width:148.7px;height:60.5px;background:linear-gradient(#a6a6a6 0,#8e8e8e 30%,#686868 100%);border-radius:4px 4px 2px 2px;box-shadow:inset 0 1px 0 #b8b8b8;"></div>
<div class="a" style="left:7.5px;top:1049px;width:138px;height:35.3px;background:#c0c0c0;border-radius:2.5px;box-shadow:0 0 0 1px rgba(60,60,60,.35);"></div>
<span class="t" style="left:61.33px;top:1089.69px;font-size:11px;transform:scaleX(1.000);color:#333;font-weight:bold;">White</span>
<div class="a" style="left:152.7px;top:1043.3px;width:148.7px;height:60.5px;background:linear-gradient(#a6a6a6 0,#8e8e8e 30%,#686868 100%);border-radius:4px 4px 2px 2px;box-shadow:inset 0 1px 0 #b8b8b8;"></div>
<div class="a" style="left:158.2px;top:1049px;width:138px;height:35.3px;background:#c00000;border-radius:2.5px;box-shadow:0 0 0 1px rgba(60,60,60,.35);"></div>
<span class="t" style="left:216.61px;top:1089.69px;font-size:11px;transform:scaleX(1.000);color:#333;font-weight:bold;">Red</span>
<div class="a" style="left:303.4px;top:1043.3px;width:148.7px;height:60.5px;background:linear-gradient(#a6a6a6 0,#8e8e8e 30%,#686868 100%);border-radius:4px 4px 2px 2px;box-shadow:inset 0 1px 0 #b8b8b8;"></div>
<div class="a" style="left:308.9px;top:1049px;width:138px;height:35.3px;background:#00c000;border-radius:2.5px;box-shadow:0 0 0 1px rgba(60,60,60,.35);"></div>
<span class="t" style="left:361.8px;top:1089.69px;font-size:11px;transform:scaleX(1.000);color:#333;font-weight:bold;">Green</span>
<div class="a" style="left:454.1px;top:1043.3px;width:148.7px;height:60.5px;background:linear-gradient(#a6a6a6 0,#8e8e8e 30%,#686868 100%);border-radius:4px 4px 2px 2px;box-shadow:inset 0 1px 0 #b8b8b8;"></div>
<div class="a" style="left:459.6px;top:1049px;width:138px;height:35.3px;background:#0000c0;border-radius:2.5px;box-shadow:0 0 0 1px rgba(60,60,60,.35);"></div>
<span class="t" style="left:516.48px;top:1089.69px;font-size:11px;transform:scaleX(1.000);color:#333;font-weight:bold;">Blue</span>
<div class="a" style="left:604.8px;top:1043.3px;width:148.7px;height:60.5px;background:linear-gradient(#a6a6a6 0,#8e8e8e 30%,#686868 100%);border-radius:4px 4px 2px 2px;box-shadow:inset 0 1px 0 #b8b8b8;"></div>
<div class="a" style="left:610.3px;top:1049px;width:138px;height:35.3px;background:#00c0c0;border-radius:2.5px;box-shadow:0 0 0 1px rgba(60,60,60,.35);"></div>
<span class="t" style="left:665.65px;top:1089.69px;font-size:11px;transform:scaleX(1.000);color:#333;font-weight:bold;">Cyan</span>
<div class="a" style="left:755.5px;top:1043.3px;width:148.7px;height:60.5px;background:linear-gradient(#a6a6a6 0,#8e8e8e 30%,#686868 100%);border-radius:4px 4px 2px 2px;box-shadow:inset 0 1px 0 #b8b8b8;"></div>
<div class="a" style="left:761px;top:1049px;width:138px;height:35.3px;background:#c000c0;border-radius:2.5px;box-shadow:0 0 0 1px rgba(60,60,60,.35);"></div>
<span class="t" style="left:807.49px;top:1089.69px;font-size:11px;transform:scaleX(1.000);color:#333;font-weight:bold;">Magenta</span>
<div class="a" style="left:906.2px;top:1043.3px;width:148.7px;height:60.5px;background:linear-gradient(#a6a6a6 0,#8e8e8e 30%,#686868 100%);border-radius:4px 4px 2px 2px;box-shadow:inset 0 1px 0 #b8b8b8;"></div>
<div class="a" style="left:911.7px;top:1049px;width:138px;height:35.3px;background:#c4c400;border-radius:2.5px;box-shadow:0 0 0 1px rgba(60,60,60,.35);"></div>
<span class="t" style="left:963.38px;top:1089.69px;font-size:11px;transform:scaleX(1.000);color:#333;font-weight:bold;">Yellow</span>
<div class="a" style="left:1056.9px;top:1043.3px;width:148.7px;height:60.5px;background:linear-gradient(#1a1a1a,#383838);border-radius:4px 4px 2px 2px;"></div>
<div class="a" style="left:1062.4px;top:1049px;width:138px;height:35.3px;background:#fff;border-radius:2.5px;"></div>
<span class="t" style="left:1116.83px;top:1089.69px;font-size:11px;transform:scaleX(1.000);color:#fff;font-weight:bold;">100W</span>
<div class="a" style="left:1598.5px;top:1063.3px;width:47.3px;height:40.7px;background:linear-gradient(#8c8c8c,#6e6e6e);border-radius:3px 0 0 3px"></div>
<div class="a" style="left:1606.5px;top:1067.5px;width:31px;height:31px;background:linear-gradient(#a4a4a4,#8c8c8c);border:3px solid #2c2c2c;border-radius:5px;box-sizing:border-box"></div>
<div class="a" style="left:1615.5px;top:1075px;width:13.5px;height:14px;background:#000;"></div>
<div class="a" style="left:1647px;top:1043.5px;width:225px;height:29.5px;background:linear-gradient(#9e9e9e,#7a7a7a);border-radius:3px 3px 0 0"></div>
<div class="a" style="left:1692.5px;top:1043.5px;width:1px;height:29.5px;background:#4a4a4a;"></div>
<div class="a" style="left:1737.2px;top:1043.5px;width:1px;height:29.5px;background:#4a4a4a;"></div>
<div class="a" style="left:1782px;top:1043.5px;width:1px;height:29.5px;background:#4a4a4a;"></div>
<div class="a" style="left:1826.8px;top:1043.5px;width:1px;height:29.5px;background:#4a4a4a;"></div>
<div class="a" style="left:1661px;top:1049px;width:18px;height:18px;background:linear-gradient(#8a8a8a,#b4b4b4);border-radius:50%"></div>
<div class="a" style="left:1706px;top:1049px;width:18px;height:18px;background:linear-gradient(#8a8a8a,#b4b4b4);border-radius:50%"></div>
<div class="a" style="left:1751px;top:1049px;width:18px;height:18px;background:linear-gradient(#8a8a8a,#b4b4b4);border-radius:50%"></div>
<div class="a" style="left:1796px;top:1049px;width:18px;height:18px;background:linear-gradient(#8a8a8a,#b4b4b4);border-radius:50%"></div>
<div class="a" style="left:1841px;top:1049px;width:18px;height:18px;background:linear-gradient(#8a8a8a,#b4b4b4);border-radius:50%"></div>
<div class="a" style="left:1647px;top:1074.3px;width:135.3px;height:29.7px;background:linear-gradient(#bababa 0,#a0a0a0 50%,#8a8a8a 100%);border-radius:5px 0 0 5px;box-shadow:inset 0 1px 0 #d0d0d0"></div>
<div class="a" style="left:1783px;top:1074.3px;width:135px;height:29.7px;background:linear-gradient(#bababa 0,#a0a0a0 50%,#8a8a8a 100%);border-radius:0 5px 5px 0;box-shadow:inset 0 1px 0 #d0d0d0"></div>
<div class="a" style="left:1782.3px;top:1074.3px;width:0.9px;height:29.7px;background:#555;"></div>
<div class="a" style="left:1667.7px;top:1079.3px;width:20px;height:20px;background:linear-gradient(#8c8c8c,#b4b4b4);border-radius:50%"></div>
<span class="t" style="left:1672.42px;top:1078.42px;font-size:19px;transform:scaleX(1.000);color:#3a3a3a;">«</span>
<div class="a" style="left:1879.2px;top:1079.3px;width:20px;height:20px;background:linear-gradient(#8c8c8c,#b4b4b4);border-radius:50%"></div>
<span class="t" style="left:1883.92px;top:1078.42px;font-size:19px;transform:scaleX(1.000);color:#3a3a3a;">»</span>
<span class="t" style="left:1704.4px;top:1077.75px;font-size:22.5px;transform:scaleX(1.000);color:#3a3a3a;-webkit-text-stroke:.4px #3a3a3a;">Back</span>
<span class="t" style="left:1810.7px;top:1077.75px;font-size:22.5px;transform:scaleX(1.094);color:#3a3a3a;-webkit-text-stroke:.4px #3a3a3a;">Next</span>
<svg class="a" style="left:1520px;top:1010px;opacity:.8" width="400" height="96" viewBox="1520 1010 400 96" fill="none" stroke-linejoin="round" stroke-linecap="round"><path d="M1550.5,1067.7L1589.8,1064.5L1588.6,1036.7L1540.5,1025.9L1542.1,1072.5L1571.9,1088.4L1626,1071.7L1595,1066.9" stroke="#d8d8d8" stroke-width="6.4" opacity=".85"/><path d="M1550.5,1067.7L1589.8,1064.5L1588.6,1036.7L1540.5,1025.9L1542.1,1072.5L1571.9,1088.4L1626,1071.7L1595,1066.9" stroke="#943038" stroke-width="4.2"/><path d="M1551.6,1042.6L1559.2,1037.9L1569.1,1049.4Q1582,1032 1593.4,1022.3L1596.2,1024.3Q1585,1040 1575.9,1056.5L1567.2,1061.7Q1560,1050 1551.6,1042.6Z" fill="#343234" stroke="#cfcfcf" stroke-width="1.5"/><text x="1597" y="1062.3" font-family="Liberation Sans,sans-serif" font-weight="bold" font-size="32.5" textLength="196" lengthAdjust="spacingAndGlyphs" fill="#a23a44" stroke="#e4e4e4" stroke-width="2.2" paint-order="stroke">NOTEBOOK</text><text x="1795.5" y="1062.6" font-family="Liberation Sans,sans-serif" font-size="33" textLength="113.5" lengthAdjust="spacingAndGlyphs" fill="#282828" stroke="#d8d8d8" stroke-width="2.1" paint-order="stroke">CHECK</text><g stroke="#e40808" stroke-width="4" stroke-linecap="butt" opacity="1"><path d="M1893.3,1045.7V1069.8M1881.9,1050.7L1905.2,1065.1M1904.4,1050.3L1882.7,1064.7"/></g></svg>
<div class="a" style="left:1913px;top:0;width:5px;height:1043px;background:linear-gradient(90deg,rgba(0,0,0,0),rgba(0,0,0,.62))"></div>
<div class="a" style="left:1918px;top:0;width:1px;height:1106px;background:linear-gradient(#4c4c4c 0,#4c4c4c 800px,#1c1c1c 800px)"></div>
<div class="a" style="left:1919px;top:0;width:1px;height:1106px;background:linear-gradient(#a8a8a8 0,#a8a8a8 800px,#363636 800px)"></div>
</body></html>
